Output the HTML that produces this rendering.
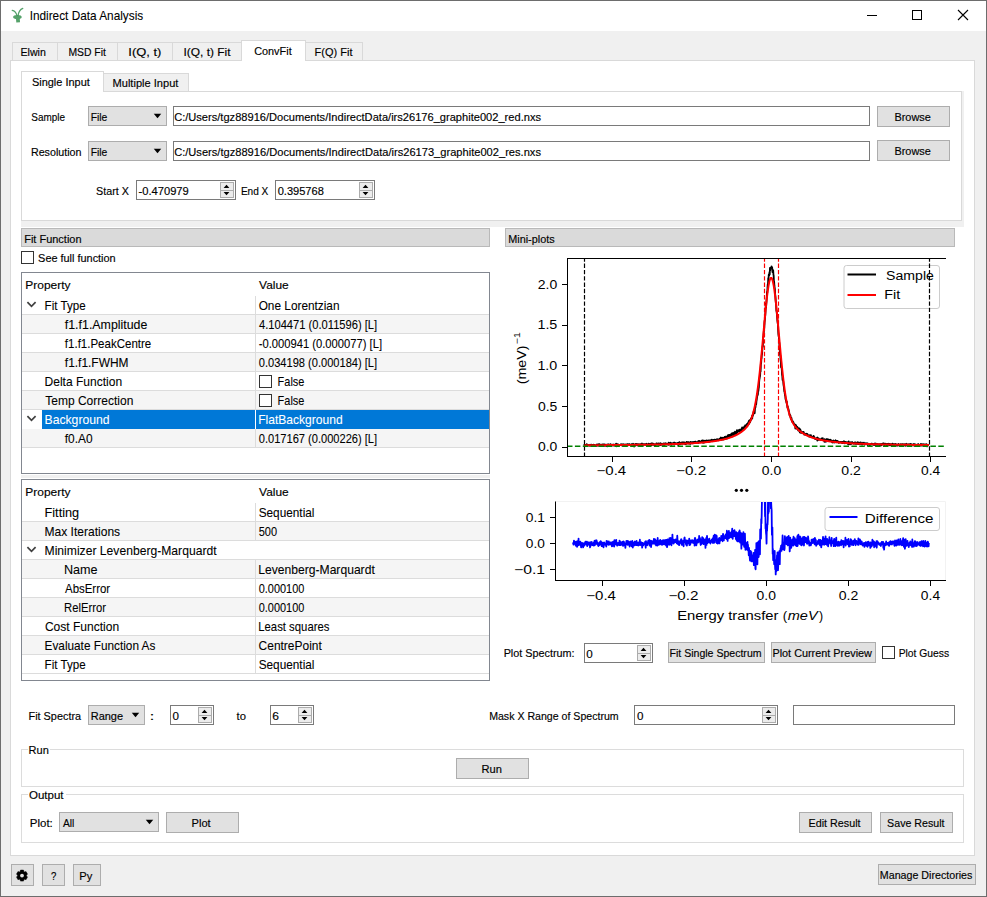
<!DOCTYPE html><html><head><meta charset="utf-8"><style>
html,body{margin:0;padding:0;}body{width:987px;height:897px;position:relative;overflow:hidden;background:#f0f0f0;font-family:"Liberation Sans",sans-serif;}
div{position:absolute;box-sizing:border-box;}svg{position:absolute;left:0;top:0;}
text{font-family:"Liberation Sans",sans-serif;white-space:pre;}
</style></head><body>
<div style="left:0px;top:0px;width:987px;height:897px;background:#f0f0f0;border:1px solid #6d6d6d;"></div>
<div style="left:1px;top:1px;width:985px;height:30px;background:#ffffff;"></div>
<div style="left:10px;top:60px;width:965px;height:796px;background:#ffffff;border:1px solid #d9d9d9;"></div>
<div style="left:12px;top:42px;width:46px;height:19px;background:#f0f0f0;border:1px solid #d9d9d9;"></div>
<div style="left:57px;top:42px;width:61px;height:19px;background:#f0f0f0;border:1px solid #d9d9d9;"></div>
<div style="left:117px;top:42px;width:56px;height:19px;background:#f0f0f0;border:1px solid #d9d9d9;"></div>
<div style="left:172px;top:42px;width:70px;height:19px;background:#f0f0f0;border:1px solid #d9d9d9;"></div>
<div style="left:305px;top:42px;width:58px;height:19px;background:#f0f0f0;border:1px solid #d9d9d9;"></div>
<div style="left:241px;top:40px;width:65px;height:21px;background:#ffffff;border:1px solid #d9d9d9;border-bottom:none;"></div>
<div style="left:21px;top:221px;width:943px;height:6px;background:#f0f0f0;"></div>
<div style="left:962px;top:91px;width:2px;height:136px;background:#f0f0f0;"></div>
<div style="left:21px;top:91px;width:941px;height:130px;background:#ffffff;border:1px solid #d9d9d9;"></div>
<div style="left:103px;top:73px;width:86px;height:19px;background:#f0f0f0;border:1px solid #d9d9d9;"></div>
<div style="left:21px;top:71px;width:83px;height:21px;background:#ffffff;border:1px solid #d9d9d9;border-bottom:none;"></div>
<div style="left:88px;top:106px;width:79px;height:20px;background:#e1e1e1;border:1px solid #adadad;"></div>
<div style="left:173px;top:106px;width:697px;height:20px;background:#ffffff;border:1px solid #7a7a7a;"></div>
<div style="left:877px;top:106px;width:73px;height:21px;background:#e1e1e1;border:1px solid #adadad;"></div>
<div style="left:88px;top:141px;width:79px;height:20px;background:#e1e1e1;border:1px solid #adadad;"></div>
<div style="left:173px;top:141px;width:697px;height:20px;background:#ffffff;border:1px solid #7a7a7a;"></div>
<div style="left:877px;top:140px;width:73px;height:21px;background:#e1e1e1;border:1px solid #adadad;"></div>
<div style="left:136px;top:180px;width:100px;height:20px;background:#ffffff;border:1px solid #7a7a7a;"></div>
<div style="left:220px;top:182px;width:14px;height:9px;background:#ececec;border:1px solid #acacac;"></div>
<div style="left:220px;top:190px;width:14px;height:8px;background:#ececec;border:1px solid #acacac;"></div>
<div style="left:275px;top:180px;width:100px;height:20px;background:#ffffff;border:1px solid #7a7a7a;"></div>
<div style="left:359px;top:182px;width:14px;height:9px;background:#ececec;border:1px solid #acacac;"></div>
<div style="left:359px;top:190px;width:14px;height:8px;background:#ececec;border:1px solid #acacac;"></div>
<div style="left:21px;top:228px;width:469px;height:19px;background:#dadada;border:1px solid #b9b9b9;"></div>
<div style="left:21px;top:251px;width:13px;height:13px;background:#ffffff;border:1px solid #333333;"></div>
<div style="left:21px;top:272px;width:469px;height:202px;background:#ffffff;border:1px solid #828790;"></div>
<div style="left:22px;top:314px;width:467px;height:1px;background:#dcdcdc;"></div>
<div style="left:255px;top:296px;width:1px;height:19px;background:#dcdcdc;"></div>
<div style="left:22px;top:315px;width:467px;height:18px;background:#f5f5f5;"></div>
<div style="left:22px;top:333px;width:467px;height:1px;background:#dcdcdc;"></div>
<div style="left:255px;top:315px;width:1px;height:19px;background:#dcdcdc;"></div>
<div style="left:22px;top:352px;width:467px;height:1px;background:#dcdcdc;"></div>
<div style="left:255px;top:334px;width:1px;height:19px;background:#dcdcdc;"></div>
<div style="left:22px;top:353px;width:467px;height:18px;background:#f5f5f5;"></div>
<div style="left:22px;top:371px;width:467px;height:1px;background:#dcdcdc;"></div>
<div style="left:255px;top:353px;width:1px;height:19px;background:#dcdcdc;"></div>
<div style="left:22px;top:390px;width:467px;height:1px;background:#dcdcdc;"></div>
<div style="left:255px;top:372px;width:1px;height:19px;background:#dcdcdc;"></div>
<div style="left:259px;top:375px;width:13px;height:13px;background:#ffffff;border:1px solid #333333;"></div>
<div style="left:22px;top:391px;width:467px;height:18px;background:#f5f5f5;"></div>
<div style="left:22px;top:409px;width:467px;height:1px;background:#dcdcdc;"></div>
<div style="left:255px;top:391px;width:1px;height:19px;background:#dcdcdc;"></div>
<div style="left:259px;top:394px;width:13px;height:13px;background:#ffffff;border:1px solid #333333;"></div>
<div style="left:42px;top:410px;width:447px;height:19px;background:#0078d7;"></div>
<div style="left:255px;top:410px;width:1px;height:19px;background:#ffffff;"></div>
<div style="left:22px;top:429px;width:467px;height:18px;background:#f5f5f5;"></div>
<div style="left:22px;top:447px;width:467px;height:1px;background:#dcdcdc;"></div>
<div style="left:255px;top:429px;width:1px;height:19px;background:#dcdcdc;"></div>
<div style="left:21px;top:475px;width:469px;height:3px;background:#f0f0f0;"></div>
<div style="left:21px;top:479px;width:469px;height:202px;background:#ffffff;border:1px solid #828790;"></div>
<div style="left:22px;top:521px;width:467px;height:1px;background:#dcdcdc;"></div>
<div style="left:255px;top:503px;width:1px;height:19px;background:#dcdcdc;"></div>
<div style="left:22px;top:522px;width:467px;height:18px;background:#f5f5f5;"></div>
<div style="left:22px;top:540px;width:467px;height:1px;background:#dcdcdc;"></div>
<div style="left:255px;top:522px;width:1px;height:19px;background:#dcdcdc;"></div>
<div style="left:22px;top:559px;width:467px;height:1px;background:#dcdcdc;"></div>
<div style="left:22px;top:560px;width:467px;height:18px;background:#f5f5f5;"></div>
<div style="left:22px;top:578px;width:467px;height:1px;background:#dcdcdc;"></div>
<div style="left:255px;top:560px;width:1px;height:19px;background:#dcdcdc;"></div>
<div style="left:22px;top:597px;width:467px;height:1px;background:#dcdcdc;"></div>
<div style="left:255px;top:579px;width:1px;height:19px;background:#dcdcdc;"></div>
<div style="left:22px;top:598px;width:467px;height:18px;background:#f5f5f5;"></div>
<div style="left:22px;top:616px;width:467px;height:1px;background:#dcdcdc;"></div>
<div style="left:255px;top:598px;width:1px;height:19px;background:#dcdcdc;"></div>
<div style="left:22px;top:635px;width:467px;height:1px;background:#dcdcdc;"></div>
<div style="left:255px;top:617px;width:1px;height:19px;background:#dcdcdc;"></div>
<div style="left:22px;top:636px;width:467px;height:18px;background:#f5f5f5;"></div>
<div style="left:22px;top:654px;width:467px;height:1px;background:#dcdcdc;"></div>
<div style="left:255px;top:636px;width:1px;height:19px;background:#dcdcdc;"></div>
<div style="left:22px;top:673px;width:467px;height:1px;background:#dcdcdc;"></div>
<div style="left:255px;top:655px;width:1px;height:19px;background:#dcdcdc;"></div>
<div style="left:505px;top:228px;width:450px;height:19px;background:#dadada;border:1px solid #b9b9b9;"></div>
<div style="left:584px;top:643px;width:69px;height:20px;background:#ffffff;border:1px solid #7a7a7a;"></div>
<div style="left:637px;top:645px;width:14px;height:9px;background:#ececec;border:1px solid #acacac;"></div>
<div style="left:637px;top:653px;width:14px;height:8px;background:#ececec;border:1px solid #acacac;"></div>
<div style="left:668px;top:642px;width:97px;height:21px;background:#e1e1e1;border:1px solid #adadad;"></div>
<div style="left:771px;top:642px;width:105px;height:21px;background:#e1e1e1;border:1px solid #adadad;"></div>
<div style="left:882px;top:646px;width:13px;height:13px;background:#ffffff;border:1px solid #333333;"></div>
<div style="left:88px;top:705px;width:57px;height:20px;background:#e1e1e1;border:1px solid #adadad;"></div>
<div style="left:170px;top:705px;width:44px;height:20px;background:#ffffff;border:1px solid #7a7a7a;"></div>
<div style="left:198px;top:707px;width:14px;height:9px;background:#ececec;border:1px solid #acacac;"></div>
<div style="left:198px;top:715px;width:14px;height:8px;background:#ececec;border:1px solid #acacac;"></div>
<div style="left:270px;top:705px;width:44px;height:20px;background:#ffffff;border:1px solid #7a7a7a;"></div>
<div style="left:298px;top:707px;width:14px;height:9px;background:#ececec;border:1px solid #acacac;"></div>
<div style="left:298px;top:715px;width:14px;height:8px;background:#ececec;border:1px solid #acacac;"></div>
<div style="left:634px;top:705px;width:144px;height:20px;background:#ffffff;border:1px solid #7a7a7a;"></div>
<div style="left:762px;top:707px;width:14px;height:9px;background:#ececec;border:1px solid #acacac;"></div>
<div style="left:762px;top:715px;width:14px;height:8px;background:#ececec;border:1px solid #acacac;"></div>
<div style="left:793px;top:705px;width:162px;height:20px;background:#ffffff;border:1px solid #7a7a7a;"></div>
<div style="left:21px;top:749px;width:943px;height:38px;background:#ffffff;border:1px solid #dcdcdc;"></div>
<div style="left:27.5px;top:748px;width:22.7px;height:3px;background:#ffffff;"></div>
<div style="left:456px;top:758px;width:73px;height:21px;background:#e1e1e1;border:1px solid #adadad;"></div>
<div style="left:21px;top:794px;width:943px;height:49px;background:#ffffff;border:1px solid #dcdcdc;"></div>
<div style="left:27.5px;top:793px;width:38px;height:3px;background:#ffffff;"></div>
<div style="left:59px;top:812px;width:100px;height:20px;background:#e1e1e1;border:1px solid #adadad;"></div>
<div style="left:166px;top:812px;width:73px;height:21px;background:#e1e1e1;border:1px solid #adadad;"></div>
<div style="left:799px;top:812px;width:73px;height:21px;background:#e1e1e1;border:1px solid #adadad;"></div>
<div style="left:880px;top:812px;width:73px;height:21px;background:#e1e1e1;border:1px solid #adadad;"></div>
<div style="left:11px;top:864px;width:23px;height:22px;background:#e1e1e1;border:1px solid #adadad;"></div>
<div style="left:42px;top:864px;width:23px;height:22px;background:#e1e1e1;border:1px solid #adadad;"></div>
<div style="left:73px;top:864px;width:28px;height:22px;background:#e1e1e1;border:1px solid #adadad;"></div>
<div style="left:878px;top:864px;width:98px;height:21px;background:#e1e1e1;border:1px solid #adadad;"></div>
<div style="left:505px;top:250px;width:441px;height:234px;background:#ffffff;"></div>
<div style="left:505px;top:484px;width:441px;height:150px;background:#ffffff;"></div>
<svg width="987" height="897" viewBox="0 0 987 897">
<g fill="none" stroke="#43985a" stroke-linecap="round" opacity="0.9">
<path d="M12.2 10.4 C14.6 10.8 16.2 12.6 17.0 15.6" stroke-width="1.2"/>
<path d="M22.8 8.4 C20.2 9.4 18.6 11.8 18.1 15.6" stroke-width="1.2"/>
</g>
<g fill="#43985a" opacity="0.9">
<ellipse cx="17.4" cy="16.9" rx="4.3" ry="2.0"/>
<path d="M15.9 17.5 L19.7 17.5 L20 22.2 L16.3 22.5 Z"/>
</g>
<rect x="867" y="15" width="10" height="1" fill="#000"/>
<rect x="912.5" y="10.5" width="9" height="9" fill="none" stroke="#000" stroke-width="1"/>
<path d="M958 10 L968 20 M968 10 L958 20" stroke="#000" stroke-width="1.1" fill="none"/>
<path d="M153.75 113.75 L161.25 113.75 L157.50 118.25 Z" fill="#000"/>
<path d="M153.75 148.75 L161.25 148.75 L157.50 153.25 Z" fill="#000"/>
<path d="M223.60 188.05 L229.40 188.05 L226.50 184.75 Z" fill="#000"/>
<path d="M223.60 191.95 L229.40 191.95 L226.50 195.25 Z" fill="#000"/>
<path d="M362.60 188.05 L368.40 188.05 L365.50 184.75 Z" fill="#000"/>
<path d="M362.60 191.95 L368.40 191.95 L365.50 195.25 Z" fill="#000"/>
<path d="M27.40 302.20 L31.50 306.40 L35.60 302.20" fill="none" stroke="#404040" stroke-width="1.7"/>
<path d="M27.40 416.20 L31.50 420.40 L35.60 416.20" fill="none" stroke="#404040" stroke-width="1.7"/>
<path d="M27.40 547.20 L31.50 551.40 L35.60 547.20" fill="none" stroke="#404040" stroke-width="1.7"/>
<path d="M640.60 651.05 L646.40 651.05 L643.50 647.75 Z" fill="#000"/>
<path d="M640.60 654.95 L646.40 654.95 L643.50 658.25 Z" fill="#000"/>
<path d="M131.75 712.75 L139.25 712.75 L135.50 717.25 Z" fill="#000"/>
<path d="M201.60 713.05 L207.40 713.05 L204.50 709.75 Z" fill="#000"/>
<path d="M201.60 716.95 L207.40 716.95 L204.50 720.25 Z" fill="#000"/>
<path d="M301.60 713.05 L307.40 713.05 L304.50 709.75 Z" fill="#000"/>
<path d="M301.60 716.95 L307.40 716.95 L304.50 720.25 Z" fill="#000"/>
<path d="M765.60 713.05 L771.40 713.05 L768.50 709.75 Z" fill="#000"/>
<path d="M765.60 716.95 L771.40 716.95 L768.50 720.25 Z" fill="#000"/>
<path d="M145.75 819.75 L153.25 819.75 L149.50 824.25 Z" fill="#000"/>
<polygon points="20.52,870.09 23.48,870.09 23.90,871.52 24.58,871.91 26.03,871.57 27.51,874.12 26.48,875.21 26.48,875.99 27.51,877.08 26.03,879.63 24.58,879.29 23.90,879.68 23.48,881.11 20.52,881.11 20.10,879.68 19.42,879.29 17.97,879.63 16.49,877.08 17.52,875.99 17.52,875.21 16.49,874.12 17.97,871.57 19.42,871.91 20.10,871.52" fill="#000" stroke="#000" stroke-width="0.5" stroke-linejoin="round"/>
<circle cx="22.0" cy="875.6" r="1.9" fill="#e1e1e1"/>
<defs><clipPath id="ctop"><rect x="567.5" y="258.5" width="378.5" height="198"/></clipPath><clipPath id="cbot"><rect x="555.5" y="501.5" width="390.5" height="79"/></clipPath></defs>
<g clip-path="url(#ctop)">
<polyline points="584.05,444.32 584.30,445.05 584.54,445.35 584.79,445.20 585.04,444.92 585.28,444.94 585.53,445.27 585.78,444.86 586.02,445.29 586.27,445.47 586.52,445.29 586.76,444.15 587.01,445.65 587.26,445.34 587.50,445.75 587.75,445.03 588.00,445.60 588.24,445.46 588.49,445.07 588.74,445.13 588.98,445.16 589.23,445.07 589.48,445.19 589.72,445.16 589.97,445.81 590.21,444.76 590.46,444.82 590.71,445.66 590.95,445.14 591.20,444.63 591.45,445.30 591.69,445.18 591.94,444.91 592.19,444.93 592.43,445.57 592.68,444.99 592.93,444.96 593.17,445.45 593.42,445.53 593.67,444.60 593.91,445.18 594.16,445.03 594.41,445.61 594.65,445.05 594.90,445.70 595.15,445.34 595.39,445.42 595.64,445.44 595.89,445.54 596.13,446.00 596.38,445.26 596.63,444.87 596.87,444.44 597.12,445.08 597.37,445.55 597.61,445.31 597.86,444.41 598.11,445.62 598.35,444.47 598.60,445.05 598.85,444.97 599.09,445.46 599.34,444.20 599.58,445.19 599.83,445.23 600.08,444.86 600.32,445.88 600.57,445.85 600.82,444.64 601.06,444.57 601.31,445.16 601.56,446.09 601.80,445.27 602.05,445.92 602.30,444.48 602.54,445.32 602.79,444.79 603.04,445.73 603.28,444.73 603.53,444.86 603.78,444.99 604.02,444.29 604.27,444.37 604.52,445.88 604.76,445.31 605.01,445.24 605.26,445.53 605.50,444.67 605.75,445.88 606.00,445.23 606.24,445.56 606.49,445.80 606.74,444.57 606.98,444.65 607.23,446.28 607.48,444.93 607.72,445.65 607.97,444.34 608.22,444.98 608.46,444.34 608.71,445.20 608.95,445.01 609.20,445.36 609.45,444.89 609.69,444.88 609.94,444.53 610.19,445.24 610.43,444.40 610.68,444.12 610.93,445.88 611.17,445.25 611.42,445.16 611.67,445.63 611.91,445.09 612.16,444.95 612.41,445.33 612.65,444.67 612.90,445.41 613.15,445.67 613.39,445.19 613.64,445.03 613.89,444.52 614.13,445.22 614.38,445.04 614.63,444.91 614.87,445.32 615.12,444.76 615.37,445.12 615.61,444.93 615.86,445.26 616.11,443.64 616.35,446.25 616.60,445.18 616.85,445.24 617.09,444.94 617.34,444.22 617.59,444.62 617.83,445.32 618.08,444.78 618.32,444.55 618.57,444.75 618.82,445.05 619.06,444.98 619.31,445.10 619.56,444.94 619.80,444.84 620.05,445.07 620.30,444.62 620.54,445.19 620.79,444.48 621.04,444.23 621.28,444.36 621.53,444.83 621.78,445.38 622.02,444.71 622.27,444.96 622.52,445.73 622.76,444.29 623.01,444.12 623.26,444.65 623.50,445.14 623.75,444.57 624.00,444.49 624.24,446.00 624.49,445.77 624.74,445.35 624.98,444.60 625.23,444.90 625.48,444.88 625.72,444.94 625.97,444.47 626.22,444.68 626.46,445.32 626.71,444.67 626.96,444.97 627.20,444.23 627.45,444.17 627.70,445.45 627.94,444.67 628.19,444.22 628.43,445.13 628.68,444.50 628.93,444.75 629.17,444.51 629.42,444.26 629.67,444.24 629.91,444.99 630.16,444.88 630.41,445.08 630.65,445.35 630.90,444.64 631.15,444.69 631.39,445.37 631.64,444.24 631.89,445.74 632.13,445.62 632.38,444.83 632.63,444.29 632.87,444.33 633.12,443.72 633.37,444.74 633.61,444.56 633.86,444.90 634.11,446.60 634.35,445.53 634.60,444.96 634.85,445.12 635.09,444.15 635.34,445.11 635.59,444.24 635.83,444.95 636.08,444.19 636.33,443.89 636.57,444.13 636.82,444.36 637.07,444.91 637.31,445.50 637.56,444.05 637.80,444.33 638.05,445.45 638.30,444.32 638.54,444.89 638.79,444.28 639.04,444.57 639.28,445.41 639.53,444.47 639.78,444.43 640.02,444.38 640.27,445.54 640.52,444.28 640.76,444.93 641.01,444.76 641.26,444.10 641.50,445.00 641.75,443.95 642.00,443.50 642.24,445.12 642.49,444.78 642.74,444.94 642.98,444.77 643.23,444.54 643.48,444.21 643.72,444.75 643.97,444.06 644.22,444.66 644.46,444.65 644.71,444.54 644.96,444.07 645.20,444.38 645.45,444.56 645.70,444.77 645.94,444.55 646.19,444.40 646.44,443.79 646.68,444.58 646.93,444.96 647.17,444.64 647.42,444.63 647.67,444.37 647.91,444.80 648.16,444.85 648.41,445.67 648.65,443.72 648.90,444.91 649.15,444.23 649.39,444.21 649.64,445.09 649.89,444.47 650.13,444.23 650.38,443.71 650.63,444.03 650.87,445.48 651.12,444.86 651.37,444.67 651.61,443.35 651.86,444.98 652.11,443.33 652.35,444.20 652.60,444.47 652.85,444.70 653.09,443.54 653.34,444.57 653.59,444.09 653.83,444.48 654.08,444.87 654.33,445.24 654.57,444.27 654.82,444.55 655.07,444.96 655.31,445.31 655.56,444.33 655.81,445.01 656.05,444.12 656.30,443.52 656.54,443.35 656.79,443.42 657.04,444.43 657.28,443.64 657.53,444.40 657.78,444.06 658.02,444.63 658.27,444.06 658.52,443.41 658.76,443.80 659.01,444.84 659.26,444.34 659.50,444.50 659.75,444.85 660.00,444.85 660.24,443.24 660.49,443.63 660.74,445.07 660.98,444.67 661.23,443.70 661.48,444.42 661.72,444.67 661.97,444.35 662.22,444.68 662.46,444.43 662.71,444.00 662.96,443.62 663.20,443.74 663.45,444.79 663.70,443.49 663.94,444.16 664.19,444.39 664.44,443.74 664.68,444.79 664.93,443.52 665.18,444.34 665.42,443.58 665.67,443.16 665.91,444.44 666.16,443.89 666.41,444.05 666.65,443.83 666.90,443.60 667.15,444.23 667.39,444.40 667.64,444.13 667.89,444.53 668.13,443.99 668.38,444.64 668.63,442.64 668.87,444.91 669.12,444.35 669.37,443.36 669.61,443.29 669.86,443.61 670.11,444.37 670.35,442.66 670.60,443.61 670.85,443.13 671.09,443.55 671.34,444.94 671.59,444.42 671.83,443.26 672.08,443.70 672.33,444.41 672.57,444.02 672.82,443.22 673.07,444.14 673.31,443.71 673.56,443.60 673.81,442.71 674.05,444.63 674.30,443.86 674.55,442.71 674.79,443.75 675.04,443.79 675.28,443.42 675.53,443.18 675.78,443.75 676.02,443.85 676.27,443.44 676.52,443.45 676.76,444.14 677.01,443.33 677.26,443.40 677.50,444.23 677.75,442.91 678.00,444.15 678.24,445.04 678.49,443.11 678.74,442.79 678.98,443.22 679.23,443.64 679.48,442.25 679.72,444.45 679.97,443.69 680.22,443.74 680.46,443.47 680.71,443.70 680.96,443.28 681.20,443.78 681.45,442.69 681.70,442.52 681.94,443.32 682.19,442.93 682.44,443.56 682.68,442.34 682.93,442.23 683.18,443.62 683.42,443.50 683.67,442.96 683.92,442.58 684.16,442.63 684.41,443.43 684.65,442.39 684.90,443.02 685.15,444.23 685.39,442.97 685.64,442.99 685.89,442.63 686.13,442.76 686.38,443.92 686.63,441.82 686.87,443.38 687.12,442.38 687.37,442.27 687.61,442.83 687.86,443.22 688.11,442.22 688.35,443.01 688.60,442.24 688.85,442.98 689.09,443.62 689.34,442.82 689.59,443.11 689.83,443.04 690.08,443.85 690.33,441.81 690.57,443.81 690.82,442.64 691.07,443.16 691.31,442.22 691.56,442.45 691.81,442.55 692.05,442.75 692.30,443.37 692.55,442.23 692.79,442.69 693.04,441.98 693.29,442.41 693.53,442.73 693.78,442.02 694.03,442.66 694.27,442.54 694.52,442.03 694.76,442.13 695.01,441.78 695.26,442.47 695.50,441.59 695.75,442.57 696.00,442.40 696.24,442.57 696.49,442.74 696.74,442.25 696.98,442.34 697.23,442.47 697.48,442.99 697.72,442.34 697.97,442.01 698.22,441.20 698.46,442.27 698.71,442.86 698.96,441.87 699.20,440.82 699.45,441.96 699.70,442.15 699.94,441.52 700.19,441.71 700.44,442.00 700.68,441.74 700.93,441.94 701.18,442.12 701.42,441.60 701.67,440.64 701.92,442.22 702.16,442.61 702.41,441.46 702.66,440.48 702.90,441.07 703.15,440.83 703.40,442.39 703.64,440.71 703.89,442.82 704.13,441.34 704.38,442.27 704.63,441.64 704.87,440.74 705.12,440.62 705.37,441.63 705.61,441.13 705.86,441.20 706.11,441.43 706.35,441.74 706.60,440.36 706.85,441.40 707.09,440.66 707.34,441.80 707.59,441.26 707.83,440.59 708.08,441.83 708.33,440.40 708.57,440.64 708.82,441.47 709.07,440.72 709.31,441.74 709.56,440.53 709.81,441.04 710.05,440.66 710.30,440.19 710.55,440.53 710.79,441.23 711.04,441.19 711.29,440.71 711.53,440.55 711.78,439.68 712.03,440.42 712.27,440.63 712.52,440.72 712.77,440.06 713.01,440.63 713.26,440.07 713.50,440.94 713.75,440.21 714.00,440.94 714.24,439.99 714.49,439.69 714.74,439.75 714.98,439.75 715.23,439.84 715.48,440.10 715.72,440.93 715.97,439.71 716.22,439.78 716.46,439.96 716.71,439.58 716.96,439.07 717.20,440.07 717.45,439.98 717.70,439.33 717.94,439.78 718.19,439.77 718.44,440.26 718.68,439.93 718.93,439.87 719.18,439.36 719.42,438.76 719.67,438.78 719.92,438.93 720.16,438.71 720.41,439.83 720.66,438.00 720.90,437.47 721.15,439.61 721.40,438.38 721.64,439.75 721.89,438.05 722.14,438.44 722.38,437.82 722.63,438.53 722.87,437.74 723.12,439.50 723.37,438.01 723.61,438.53 723.86,439.42 724.11,437.63 724.35,438.08 724.60,436.87 724.85,437.21 725.09,438.19 725.34,437.33 725.59,438.97 725.83,437.54 726.08,436.54 726.33,437.33 726.57,437.43 726.82,438.53 727.07,438.31 727.31,436.50 727.56,437.87 727.81,435.43 728.05,436.42 728.30,435.02 728.55,437.00 728.79,435.62 729.04,436.93 729.29,434.96 729.53,437.28 729.78,435.96 730.03,435.79 730.27,435.11 730.52,434.53 730.77,436.31 731.01,435.42 731.26,435.25 731.51,437.19 731.75,433.39 732.00,435.10 732.24,433.16 732.49,434.06 732.74,434.48 732.98,433.06 733.23,433.06 733.48,435.05 733.72,434.12 733.97,433.22 734.22,432.45 734.46,434.07 734.71,432.90 734.96,431.68 735.20,433.34 735.45,432.78 735.70,434.02 735.94,432.85 736.19,432.39 736.44,433.71 736.68,431.61 736.93,430.22 737.18,430.56 737.42,432.38 737.67,430.82 737.92,430.76 738.16,431.71 738.41,430.11 738.66,430.48 738.90,430.90 739.15,430.10 739.40,431.03 739.64,429.65 739.89,431.63 740.14,429.99 740.38,430.31 740.63,430.62 740.88,429.56 741.12,429.10 741.37,430.75 741.61,430.09 741.86,428.50 742.11,427.45 742.35,429.00 742.60,428.60 742.85,428.12 743.09,427.88 743.34,428.20 743.59,427.78 743.83,427.12 744.08,429.22 744.33,427.60 744.57,426.21 744.82,427.94 745.07,426.19 745.31,425.25 745.56,425.47 745.81,425.97 746.05,425.50 746.30,426.20 746.55,425.72 746.79,424.69 747.04,423.80 747.29,426.37 747.53,424.44 747.78,424.16 748.03,423.21 748.27,422.28 748.52,421.85 748.77,424.11 749.01,420.73 749.26,421.48 749.51,421.16 749.75,421.74 750.00,422.41 750.25,419.59 750.49,420.60 750.74,420.53 750.98,418.39 751.23,419.17 751.48,418.23 751.72,417.99 751.97,415.84 752.22,418.63 752.46,415.77 752.71,415.08 752.96,415.62 753.20,414.03 753.45,412.83 753.70,411.47 753.94,411.06 754.19,410.65 754.44,409.70 754.68,413.25 754.93,408.71 755.18,407.90 755.42,407.38 755.67,405.38 755.92,402.88 756.16,404.46 756.41,401.43 756.66,400.13 756.90,398.04 757.15,396.72 757.40,394.86 757.64,395.31 757.89,394.32 758.14,388.68 758.38,391.08 758.63,388.72 758.88,387.01 759.12,382.05 759.37,379.67 759.62,378.34 759.86,376.23 760.11,376.25 760.35,370.83 760.60,371.40 760.85,364.18 761.09,364.07 761.34,359.55 761.59,357.89 761.83,354.44 762.08,354.31 762.33,349.43 762.57,346.10 762.82,346.62 763.07,338.28 763.31,337.62 763.56,335.15 763.81,331.47 764.05,328.86 764.30,328.08 764.55,322.16 764.79,320.30 765.04,317.52 765.29,315.09 765.53,310.45 765.78,303.77 766.03,307.84 766.27,304.02 766.52,300.58 766.77,296.59 767.01,291.82 767.26,293.08 767.51,287.61 767.75,284.43 768.00,284.60 768.25,278.04 768.49,280.01 768.74,275.06 768.99,274.26 769.23,275.34 769.48,272.25 769.73,274.42 769.97,267.83 770.22,270.33 770.46,267.95 770.71,268.01 770.96,268.33 771.20,268.22 771.45,266.51 771.70,266.63 771.94,267.83 772.19,267.55 772.44,272.01 772.68,269.63 772.93,271.98 773.18,270.42 773.42,274.56 773.67,275.64 773.92,281.73 774.16,281.74 774.41,285.97 774.66,287.55 774.90,289.40 775.15,293.98 775.40,296.29 775.64,299.93 775.89,302.89 776.14,305.41 776.38,310.87 776.63,310.62 776.88,314.79 777.12,317.36 777.37,320.54 777.62,322.50 777.86,323.75 778.11,329.17 778.36,333.86 778.60,335.89 778.85,336.80 779.10,342.68 779.34,342.85 779.59,350.01 779.83,349.02 780.08,354.77 780.33,355.66 780.57,359.80 780.82,361.26 781.07,367.17 781.31,366.98 781.56,367.61 781.81,369.72 782.05,374.67 782.30,376.01 782.55,379.95 782.79,379.02 783.04,379.96 783.29,382.14 783.53,385.17 783.78,386.28 784.03,388.37 784.27,391.25 784.52,391.68 784.77,393.76 785.01,395.49 785.26,395.93 785.51,399.05 785.75,399.70 786.00,401.09 786.25,401.08 786.49,402.85 786.74,401.28 786.99,404.58 787.23,405.45 787.48,407.88 787.73,406.29 787.97,408.57 788.22,408.21 788.47,409.68 788.71,410.23 788.96,412.06 789.20,412.38 789.45,414.33 789.70,415.56 789.94,414.52 790.19,415.06 790.44,415.70 790.68,417.91 790.93,418.94 791.18,418.79 791.42,417.78 791.67,419.33 791.92,421.39 792.16,421.02 792.41,422.02 792.66,421.90 792.90,421.32 793.15,422.60 793.40,422.23 793.64,423.21 793.89,424.23 794.14,423.93 794.38,424.63 794.63,424.81 794.88,425.86 795.12,426.03 795.37,428.55 795.62,424.73 795.86,426.56 796.11,425.56 796.36,428.47 796.60,426.49 796.85,428.75 797.10,426.92 797.34,426.94 797.59,428.94 797.84,429.57 798.08,429.30 798.33,430.62 798.57,429.58 798.82,428.23 799.07,430.13 799.31,429.86 799.56,428.75 799.81,432.34 800.05,429.47 800.30,429.34 800.55,431.86 800.79,432.79 801.04,431.20 801.29,431.76 801.53,432.49 801.78,431.91 802.03,432.74 802.27,432.58 802.52,432.15 802.77,432.28 803.01,432.66 803.26,432.01 803.51,433.40 803.75,432.15 804.00,434.14 804.25,434.62 804.49,433.69 804.74,433.84 804.99,434.62 805.23,434.19 805.48,434.74 805.73,434.43 805.97,433.70 806.22,433.59 806.47,434.20 806.71,434.12 806.96,435.16 807.21,433.95 807.45,434.44 807.70,434.38 807.94,435.19 808.19,435.63 808.44,436.23 808.68,435.71 808.93,436.22 809.18,436.48 809.42,435.67 809.67,435.19 809.92,435.78 810.16,435.40 810.41,436.71 810.66,436.58 810.90,435.17 811.15,437.05 811.40,436.76 811.64,436.75 811.89,437.05 812.14,436.69 812.38,437.44 812.63,437.35 812.88,437.00 813.12,437.07 813.37,437.35 813.62,435.82 813.86,438.14 814.11,436.94 814.36,437.02 814.60,438.50 814.85,438.26 815.10,438.53 815.34,438.77 815.59,439.13 815.84,438.85 816.08,439.00 816.33,438.82 816.58,438.32 816.82,438.14 817.07,437.58 817.31,440.66 817.56,437.58 817.81,439.33 818.05,438.71 818.30,439.92 818.55,438.92 818.79,438.44 819.04,439.79 819.29,439.17 819.53,439.42 819.78,439.37 820.03,439.52 820.27,439.44 820.52,439.85 820.77,439.07 821.01,439.93 821.26,439.55 821.51,438.49 821.75,439.40 822.00,439.76 822.25,438.36 822.49,439.16 822.74,438.09 822.99,439.79 823.23,439.61 823.48,439.89 823.73,439.49 823.97,440.72 824.22,439.79 824.47,441.77 824.71,439.04 824.96,439.93 825.21,440.75 825.45,439.62 825.70,441.24 825.95,441.73 826.19,441.00 826.44,440.32 826.68,441.11 826.93,438.83 827.18,440.67 827.42,440.13 827.67,440.29 827.92,440.73 828.16,439.68 828.41,439.39 828.66,440.55 828.90,440.36 829.15,439.82 829.40,440.92 829.64,440.92 829.89,441.29 830.14,439.58 830.38,440.47 830.63,440.56 830.88,440.10 831.12,440.74 831.37,440.43 831.62,441.47 831.86,440.81 832.11,442.24 832.36,441.26 832.60,442.47 832.85,441.05 833.10,440.91 833.34,440.53 833.59,442.25 833.84,441.54 834.08,441.86 834.33,441.20 834.58,441.61 834.82,442.47 835.07,441.31 835.32,440.89 835.56,440.23 835.81,440.94 836.06,440.98 836.30,441.21 836.55,441.92 836.79,440.85 837.04,442.42 837.29,441.17 837.53,441.90 837.78,441.04 838.03,441.78 838.27,442.09 838.52,442.25 838.77,442.94 839.01,442.16 839.26,442.13 839.51,441.96 839.75,442.51 840.00,442.60 840.25,441.85 840.49,442.50 840.74,441.96 840.99,441.85 841.23,441.95 841.48,441.99 841.73,442.09 841.97,443.06 842.22,442.11 842.47,442.75 842.71,441.94 842.96,443.12 843.21,442.62 843.45,441.95 843.70,442.57 843.95,441.22 844.19,442.23 844.44,442.12 844.69,443.35 844.93,443.06 845.18,441.80 845.43,442.22 845.67,443.09 845.92,442.84 846.16,442.17 846.41,443.21 846.66,442.60 846.90,442.80 847.15,442.29 847.40,442.75 847.64,443.16 847.89,442.89 848.14,444.42 848.38,442.30 848.63,441.42 848.88,443.04 849.12,444.30 849.37,442.64 849.62,443.12 849.86,443.75 850.11,442.42 850.36,443.56 850.60,442.38 850.85,444.26 851.10,443.98 851.34,443.26 851.59,443.49 851.84,442.24 852.08,442.40 852.33,442.17 852.58,442.73 852.82,442.62 853.07,442.83 853.32,443.08 853.56,443.56 853.81,443.00 854.06,443.40 854.30,443.69 854.55,443.59 854.80,442.46 855.04,442.76 855.29,443.82 855.53,442.31 855.78,443.46 856.03,443.81 856.27,443.89 856.52,442.98 856.77,443.82 857.01,443.17 857.26,443.30 857.51,442.28 857.75,443.27 858.00,444.06 858.25,442.42 858.49,442.99 858.74,444.00 858.99,444.01 859.23,443.86 859.48,443.93 859.73,442.62 859.97,443.96 860.22,442.96 860.47,443.91 860.71,442.51 860.96,443.98 861.21,444.16 861.45,443.67 861.70,444.41 861.95,443.92 862.19,444.51 862.44,442.78 862.69,443.61 862.93,443.66 863.18,443.99 863.43,443.49 863.67,444.17 863.92,442.73 864.17,444.15 864.41,444.28 864.66,444.54 864.90,443.43 865.15,443.99 865.40,443.61 865.64,444.13 865.89,443.18 866.14,444.25 866.38,443.81 866.63,443.97 866.88,443.36 867.12,443.91 867.37,443.37 867.62,444.52 867.86,444.98 868.11,443.74 868.36,444.44 868.60,443.81 868.85,444.09 869.10,444.61 869.34,444.53 869.59,444.80 869.84,445.03 870.08,443.86 870.33,443.96 870.58,444.70 870.82,444.59 871.07,444.37 871.32,443.56 871.56,443.74 871.81,443.73 872.06,443.64 872.30,444.17 872.55,444.21 872.80,443.95 873.04,444.64 873.29,444.87 873.54,444.55 873.78,444.31 874.03,443.85 874.27,443.67 874.52,444.90 874.77,443.59 875.01,445.02 875.26,443.69 875.51,444.61 875.75,443.78 876.00,444.65 876.25,443.77 876.49,444.95 876.74,444.94 876.99,444.12 877.23,444.22 877.48,444.31 877.73,443.96 877.97,444.91 878.22,444.28 878.47,444.30 878.71,444.72 878.96,444.48 879.21,444.82 879.45,444.94 879.70,444.22 879.95,444.11 880.19,444.17 880.44,445.32 880.69,445.27 880.93,444.24 881.18,444.83 881.43,445.18 881.67,444.64 881.92,443.93 882.17,443.97 882.41,444.32 882.66,443.72 882.91,444.01 883.15,443.46 883.40,444.68 883.64,443.43 883.89,443.85 884.14,443.74 884.38,444.40 884.63,445.05 884.88,444.25 885.12,443.61 885.37,444.48 885.62,444.24 885.86,443.87 886.11,444.48 886.36,445.25 886.60,444.42 886.85,445.32 887.10,443.97 887.34,444.34 887.59,444.04 887.84,444.95 888.08,444.98 888.33,444.13 888.58,443.69 888.82,443.88 889.07,444.47 889.32,444.03 889.56,443.90 889.81,445.28 890.06,444.22 890.30,445.25 890.55,444.69 890.80,444.24 891.04,444.92 891.29,444.74 891.54,444.16 891.78,445.29 892.03,445.01 892.28,444.76 892.52,443.74 892.77,444.19 893.01,445.31 893.26,444.07 893.51,444.77 893.75,444.74 894.00,444.13 894.25,445.05 894.49,444.67 894.74,445.05 894.99,444.24 895.23,443.89 895.48,444.62 895.73,444.73 895.97,444.25 896.22,444.30 896.47,445.40 896.71,444.75 896.96,444.96 897.21,445.57 897.45,444.64 897.70,445.55 897.95,444.33 898.19,444.44 898.44,443.98 898.69,444.56 898.93,444.42 899.18,445.22 899.43,444.89 899.67,444.99 899.92,444.74 900.17,444.67 900.41,445.15 900.66,444.20 900.91,444.20 901.15,444.36 901.40,444.78 901.65,445.58 901.89,445.56 902.14,444.20 902.39,444.63 902.63,444.66 902.88,444.30 903.12,444.47 903.37,444.75 903.62,444.68 903.86,444.71 904.11,444.25 904.36,444.95 904.60,444.91 904.85,444.32 905.10,445.49 905.34,444.93 905.59,444.73 905.84,445.77 906.08,445.10 906.33,443.78 906.58,444.93 906.82,444.40 907.07,444.57 907.32,444.68 907.56,444.45 907.81,444.85 908.06,444.65 908.30,444.55 908.55,444.63 908.80,444.25 909.04,444.74 909.29,444.54 909.54,444.90 909.78,444.14 910.03,444.80 910.28,445.23 910.52,444.93 910.77,443.91 911.02,445.46 911.26,445.18 911.51,444.46 911.76,445.18 912.00,445.09 912.25,445.32 912.49,445.33 912.74,444.95 912.99,444.76 913.23,444.11 913.48,444.94 913.73,444.69 913.97,444.08 914.22,445.92 914.47,445.20 914.71,445.28 914.96,444.27 915.21,444.42 915.45,445.13 915.70,444.87 915.95,444.68 916.19,445.22 916.44,445.49 916.69,445.07 916.93,444.71 917.18,445.16 917.43,445.08 917.67,444.46 917.92,444.90 918.17,444.17 918.41,444.61 918.66,444.32 918.91,444.78 919.15,445.42 919.40,445.63 919.65,445.38 919.89,444.93 920.14,445.58 920.39,444.83 920.63,444.85 920.88,443.93 921.13,445.69 921.37,445.36 921.62,445.43 921.86,444.92 922.11,445.17 922.36,444.26 922.60,445.22 922.85,445.36 923.10,444.63 923.34,444.68 923.59,445.39 923.84,444.22 924.08,444.77 924.33,444.70 924.58,445.55 924.82,445.07 925.07,445.41 925.32,444.41 925.56,445.42 925.81,445.08 926.06,444.78 926.30,444.49 926.55,444.21 926.80,446.08 927.04,446.29 927.29,445.18 927.54,445.64 927.78,445.34 928.03,445.31 928.28,445.22 928.52,444.96 928.77,445.05 929.02,445.10" fill="none" stroke="#000000" stroke-width="1.8" stroke-linejoin="round"/>
<polyline points="584.05,445.25 584.30,445.25 584.54,445.25 584.79,445.25 585.04,445.25 585.28,445.24 585.53,445.24 585.78,445.24 586.02,445.24 586.27,445.24 586.52,445.24 586.76,445.24 587.01,445.24 587.26,445.23 587.50,445.23 587.75,445.23 588.00,445.23 588.24,445.23 588.49,445.23 588.74,445.23 588.98,445.23 589.23,445.22 589.48,445.22 589.72,445.22 589.97,445.22 590.21,445.22 590.46,445.22 590.71,445.22 590.95,445.21 591.20,445.21 591.45,445.21 591.69,445.21 591.94,445.21 592.19,445.21 592.43,445.21 592.68,445.21 592.93,445.20 593.17,445.20 593.42,445.20 593.67,445.20 593.91,445.20 594.16,445.20 594.41,445.20 594.65,445.19 594.90,445.19 595.15,445.19 595.39,445.19 595.64,445.19 595.89,445.19 596.13,445.19 596.38,445.18 596.63,445.18 596.87,445.18 597.12,445.18 597.37,445.18 597.61,445.18 597.86,445.18 598.11,445.17 598.35,445.17 598.60,445.17 598.85,445.17 599.09,445.17 599.34,445.17 599.58,445.17 599.83,445.16 600.08,445.16 600.32,445.16 600.57,445.16 600.82,445.16 601.06,445.16 601.31,445.15 601.56,445.15 601.80,445.15 602.05,445.15 602.30,445.15 602.54,445.15 602.79,445.14 603.04,445.14 603.28,445.14 603.53,445.14 603.78,445.14 604.02,445.14 604.27,445.13 604.52,445.13 604.76,445.13 605.01,445.13 605.26,445.13 605.50,445.13 605.75,445.12 606.00,445.12 606.24,445.12 606.49,445.12 606.74,445.12 606.98,445.12 607.23,445.11 607.48,445.11 607.72,445.11 607.97,445.11 608.22,445.11 608.46,445.11 608.71,445.10 608.95,445.10 609.20,445.10 609.45,445.10 609.69,445.10 609.94,445.09 610.19,445.09 610.43,445.09 610.68,445.09 610.93,445.09 611.17,445.09 611.42,445.08 611.67,445.08 611.91,445.08 612.16,445.08 612.41,445.08 612.65,445.07 612.90,445.07 613.15,445.07 613.39,445.07 613.64,445.07 613.89,445.06 614.13,445.06 614.38,445.06 614.63,445.06 614.87,445.06 615.12,445.05 615.37,445.05 615.61,445.05 615.86,445.05 616.11,445.05 616.35,445.04 616.60,445.04 616.85,445.04 617.09,445.04 617.34,445.04 617.59,445.03 617.83,445.03 618.08,445.03 618.32,445.03 618.57,445.02 618.82,445.02 619.06,445.02 619.31,445.02 619.56,445.02 619.80,445.01 620.05,445.01 620.30,445.01 620.54,445.01 620.79,445.00 621.04,445.00 621.28,445.00 621.53,445.00 621.78,445.00 622.02,444.99 622.27,444.99 622.52,444.99 622.76,444.99 623.01,444.98 623.26,444.98 623.50,444.98 623.75,444.98 624.00,444.97 624.24,444.97 624.49,444.97 624.74,444.97 624.98,444.96 625.23,444.96 625.48,444.96 625.72,444.96 625.97,444.95 626.22,444.95 626.46,444.95 626.71,444.95 626.96,444.94 627.20,444.94 627.45,444.94 627.70,444.94 627.94,444.93 628.19,444.93 628.43,444.93 628.68,444.93 628.93,444.92 629.17,444.92 629.42,444.92 629.67,444.92 629.91,444.91 630.16,444.91 630.41,444.91 630.65,444.90 630.90,444.90 631.15,444.90 631.39,444.90 631.64,444.89 631.89,444.89 632.13,444.89 632.38,444.88 632.63,444.88 632.87,444.88 633.12,444.88 633.37,444.87 633.61,444.87 633.86,444.87 634.11,444.86 634.35,444.86 634.60,444.86 634.85,444.85 635.09,444.85 635.34,444.85 635.59,444.85 635.83,444.84 636.08,444.84 636.33,444.84 636.57,444.83 636.82,444.83 637.07,444.83 637.31,444.82 637.56,444.82 637.80,444.82 638.05,444.81 638.30,444.81 638.54,444.81 638.79,444.80 639.04,444.80 639.28,444.80 639.53,444.79 639.78,444.79 640.02,444.79 640.27,444.78 640.52,444.78 640.76,444.78 641.01,444.77 641.26,444.77 641.50,444.77 641.75,444.76 642.00,444.76 642.24,444.76 642.49,444.75 642.74,444.75 642.98,444.75 643.23,444.74 643.48,444.74 643.72,444.73 643.97,444.73 644.22,444.73 644.46,444.72 644.71,444.72 644.96,444.72 645.20,444.71 645.45,444.71 645.70,444.70 645.94,444.70 646.19,444.70 646.44,444.69 646.68,444.69 646.93,444.68 647.17,444.68 647.42,444.68 647.67,444.67 647.91,444.67 648.16,444.66 648.41,444.66 648.65,444.66 648.90,444.65 649.15,444.65 649.39,444.64 649.64,444.64 649.89,444.64 650.13,444.63 650.38,444.63 650.63,444.62 650.87,444.62 651.12,444.61 651.37,444.61 651.61,444.61 651.86,444.60 652.11,444.60 652.35,444.59 652.60,444.59 652.85,444.58 653.09,444.58 653.34,444.57 653.59,444.57 653.83,444.56 654.08,444.56 654.33,444.55 654.57,444.55 654.82,444.54 655.07,444.54 655.31,444.54 655.56,444.53 655.81,444.53 656.05,444.52 656.30,444.52 656.54,444.51 656.79,444.51 657.04,444.50 657.28,444.50 657.53,444.49 657.78,444.48 658.02,444.48 658.27,444.47 658.52,444.47 658.76,444.46 659.01,444.46 659.26,444.45 659.50,444.45 659.75,444.44 660.00,444.44 660.24,444.43 660.49,444.43 660.74,444.42 660.98,444.41 661.23,444.41 661.48,444.40 661.72,444.40 661.97,444.39 662.22,444.39 662.46,444.38 662.71,444.37 662.96,444.37 663.20,444.36 663.45,444.36 663.70,444.35 663.94,444.34 664.19,444.34 664.44,444.33 664.68,444.33 664.93,444.32 665.18,444.31 665.42,444.31 665.67,444.30 665.91,444.29 666.16,444.29 666.41,444.28 666.65,444.27 666.90,444.27 667.15,444.26 667.39,444.25 667.64,444.25 667.89,444.24 668.13,444.23 668.38,444.23 668.63,444.22 668.87,444.21 669.12,444.21 669.37,444.20 669.61,444.19 669.86,444.18 670.11,444.18 670.35,444.17 670.60,444.16 670.85,444.16 671.09,444.15 671.34,444.14 671.59,444.13 671.83,444.13 672.08,444.12 672.33,444.11 672.57,444.10 672.82,444.09 673.07,444.09 673.31,444.08 673.56,444.07 673.81,444.06 674.05,444.05 674.30,444.05 674.55,444.04 674.79,444.03 675.04,444.02 675.28,444.01 675.53,444.00 675.78,444.00 676.02,443.99 676.27,443.98 676.52,443.97 676.76,443.96 677.01,443.95 677.26,443.94 677.50,443.93 677.75,443.93 678.00,443.92 678.24,443.91 678.49,443.90 678.74,443.89 678.98,443.88 679.23,443.87 679.48,443.86 679.72,443.85 679.97,443.84 680.22,443.83 680.46,443.82 680.71,443.81 680.96,443.80 681.20,443.79 681.45,443.78 681.70,443.77 681.94,443.76 682.19,443.75 682.44,443.74 682.68,443.73 682.93,443.72 683.18,443.71 683.42,443.70 683.67,443.69 683.92,443.67 684.16,443.66 684.41,443.65 684.65,443.64 684.90,443.63 685.15,443.62 685.39,443.61 685.64,443.59 685.89,443.58 686.13,443.57 686.38,443.56 686.63,443.55 686.87,443.54 687.12,443.52 687.37,443.51 687.61,443.50 687.86,443.49 688.11,443.47 688.35,443.46 688.60,443.45 688.85,443.43 689.09,443.42 689.34,443.41 689.59,443.39 689.83,443.38 690.08,443.37 690.33,443.35 690.57,443.34 690.82,443.33 691.07,443.31 691.31,443.30 691.56,443.28 691.81,443.27 692.05,443.25 692.30,443.24 692.55,443.22 692.79,443.21 693.04,443.19 693.29,443.18 693.53,443.16 693.78,443.15 694.03,443.13 694.27,443.12 694.52,443.10 694.76,443.09 695.01,443.07 695.26,443.05 695.50,443.04 695.75,443.02 696.00,443.00 696.24,442.99 696.49,442.97 696.74,442.95 696.98,442.93 697.23,442.92 697.48,442.90 697.72,442.88 697.97,442.86 698.22,442.84 698.46,442.83 698.71,442.81 698.96,442.79 699.20,442.77 699.45,442.75 699.70,442.73 699.94,442.71 700.19,442.69 700.44,442.67 700.68,442.65 700.93,442.63 701.18,442.61 701.42,442.59 701.67,442.57 701.92,442.55 702.16,442.53 702.41,442.50 702.66,442.48 702.90,442.46 703.15,442.44 703.40,442.42 703.64,442.39 703.89,442.37 704.13,442.35 704.38,442.32 704.63,442.30 704.87,442.28 705.12,442.25 705.37,442.23 705.61,442.20 705.86,442.18 706.11,442.15 706.35,442.13 706.60,442.10 706.85,442.08 707.09,442.05 707.34,442.02 707.59,442.00 707.83,441.97 708.08,441.94 708.33,441.91 708.57,441.89 708.82,441.86 709.07,441.83 709.31,441.80 709.56,441.77 709.81,441.74 710.05,441.71 710.30,441.68 710.55,441.65 710.79,441.62 711.04,441.59 711.29,441.56 711.53,441.53 711.78,441.49 712.03,441.46 712.27,441.43 712.52,441.40 712.77,441.36 713.01,441.33 713.26,441.29 713.50,441.26 713.75,441.22 714.00,441.19 714.24,441.15 714.49,441.11 714.74,441.08 714.98,441.04 715.23,441.00 715.48,440.96 715.72,440.93 715.97,440.89 716.22,440.85 716.46,440.81 716.71,440.77 716.96,440.72 717.20,440.68 717.45,440.64 717.70,440.60 717.94,440.55 718.19,440.51 718.44,440.47 718.68,440.42 718.93,440.38 719.18,440.33 719.42,440.28 719.67,440.24 719.92,440.19 720.16,440.14 720.41,440.09 720.66,440.04 720.90,439.99 721.15,439.94 721.40,439.89 721.64,439.84 721.89,439.78 722.14,439.73 722.38,439.68 722.63,439.62 722.87,439.57 723.12,439.51 723.37,439.45 723.61,439.40 723.86,439.34 724.11,439.28 724.35,439.22 724.60,439.16 724.85,439.09 725.09,439.03 725.34,438.97 725.59,438.90 725.83,438.84 726.08,438.77 726.33,438.70 726.57,438.64 726.82,438.57 727.07,438.50 727.31,438.43 727.56,438.35 727.81,438.28 728.05,438.21 728.30,438.13 728.55,438.05 728.79,437.98 729.04,437.90 729.29,437.82 729.53,437.74 729.78,437.66 730.03,437.57 730.27,437.49 730.52,437.40 730.77,437.32 731.01,437.23 731.26,437.14 731.51,437.05 731.75,436.96 732.00,436.86 732.24,436.77 732.49,436.67 732.74,436.57 732.98,436.47 733.23,436.37 733.48,436.27 733.72,436.17 733.97,436.06 734.22,435.95 734.46,435.84 734.71,435.73 734.96,435.62 735.20,435.51 735.45,435.39 735.70,435.27 735.94,435.15 736.19,435.03 736.44,434.90 736.68,434.78 736.93,434.65 737.18,434.52 737.42,434.39 737.67,434.25 737.92,434.12 738.16,433.98 738.41,433.84 738.66,433.69 738.90,433.54 739.15,433.39 739.40,433.24 739.64,433.09 739.89,432.93 740.14,432.77 740.38,432.61 740.63,432.44 740.88,432.27 741.12,432.10 741.37,431.92 741.61,431.74 741.86,431.56 742.11,431.37 742.35,431.18 742.60,430.98 742.85,430.78 743.09,430.58 743.34,430.37 743.59,430.15 743.83,429.93 744.08,429.71 744.33,429.48 744.57,429.24 744.82,429.00 745.07,428.75 745.31,428.49 745.56,428.23 745.81,427.96 746.05,427.68 746.30,427.39 746.55,427.09 746.79,426.79 747.04,426.47 747.29,426.14 747.53,425.81 747.78,425.45 748.03,425.09 748.27,424.72 748.52,424.33 748.77,423.92 749.01,423.50 749.26,423.06 749.51,422.61 749.75,422.13 750.00,421.64 750.25,421.12 750.49,420.59 750.74,420.03 750.98,419.44 751.23,418.84 751.48,418.20 751.72,417.54 751.97,416.84 752.22,416.12 752.46,415.36 752.71,414.57 752.96,413.75 753.20,412.88 753.45,411.98 753.70,411.04 753.94,410.06 754.19,409.04 754.44,407.97 754.68,406.85 754.93,405.69 755.18,404.48 755.42,403.22 755.67,401.91 755.92,400.54 756.16,399.13 756.41,397.65 756.66,396.12 756.90,394.54 757.15,392.90 757.40,391.20 757.64,389.44 757.89,387.62 758.14,385.74 758.38,383.81 758.63,381.81 758.88,379.76 759.12,377.65 759.37,375.48 759.62,373.26 759.86,370.99 760.11,368.66 760.35,366.28 760.60,363.85 760.85,361.38 761.09,358.86 761.34,356.31 761.59,353.71 761.83,351.08 762.08,348.43 762.33,345.74 762.57,343.04 762.82,340.31 763.07,337.58 763.31,334.84 763.56,332.09 763.81,329.35 764.05,326.62 764.30,323.90 764.55,321.21 764.79,318.54 765.04,315.90 765.29,313.30 765.53,310.75 765.78,308.25 766.03,305.81 766.27,303.43 766.52,301.13 766.77,298.90 767.01,296.75 767.26,294.70 767.51,292.74 767.75,290.88 768.00,289.12 768.25,287.48 768.49,285.95 768.74,284.55 768.99,283.27 769.23,282.11 769.48,281.10 769.73,280.21 769.97,279.47 770.22,278.86 770.46,278.40 770.71,278.08 770.96,277.91 771.20,277.89 771.45,278.01 771.70,278.27 771.94,278.68 772.19,279.23 772.44,279.93 772.68,280.76 772.93,281.73 773.18,282.83 773.42,284.07 773.67,285.43 773.92,286.91 774.16,288.51 774.41,290.23 774.66,292.05 774.90,293.98 775.15,296.00 775.40,298.11 775.64,300.31 775.89,302.59 776.14,304.94 776.38,307.36 776.63,309.84 776.88,312.37 777.12,314.96 777.37,317.58 777.62,320.24 777.86,322.92 778.11,325.63 778.36,328.36 778.60,331.10 778.85,333.84 779.10,336.59 779.34,339.32 779.59,342.05 779.83,344.76 780.08,347.46 780.33,350.12 780.57,352.76 780.82,355.37 781.07,357.94 781.31,360.47 781.56,362.96 781.81,365.41 782.05,367.80 782.30,370.15 782.55,372.44 782.79,374.68 783.04,376.87 783.29,379.00 783.53,381.07 783.78,383.09 784.03,385.05 784.27,386.95 784.52,388.78 784.77,390.56 785.01,392.29 785.26,393.95 785.51,395.56 785.75,397.11 786.00,398.60 786.25,400.04 786.49,401.42 786.74,402.75 786.99,404.03 787.23,405.26 787.48,406.44 787.73,407.57 787.97,408.65 788.22,409.69 788.47,410.69 788.71,411.65 788.96,412.56 789.20,413.44 789.45,414.28 789.70,415.08 789.94,415.85 790.19,416.58 790.44,417.29 790.68,417.96 790.93,418.61 791.18,419.23 791.42,419.82 791.67,420.39 791.92,420.93 792.16,421.45 792.41,421.96 792.66,422.44 792.90,422.90 793.15,423.34 793.40,423.77 793.64,424.18 793.89,424.58 794.14,424.96 794.38,425.32 794.63,425.68 794.88,426.02 795.12,426.35 795.37,426.67 795.62,426.98 795.86,427.28 796.11,427.58 796.36,427.86 796.60,428.13 796.85,428.40 797.10,428.66 797.34,428.91 797.59,429.15 797.84,429.39 798.08,429.62 798.33,429.85 798.57,430.07 798.82,430.29 799.07,430.50 799.31,430.71 799.56,430.91 799.81,431.11 800.05,431.30 800.30,431.49 800.55,431.67 800.79,431.85 801.04,432.03 801.29,432.21 801.53,432.38 801.78,432.55 802.03,432.71 802.27,432.87 802.52,433.03 802.77,433.19 803.01,433.34 803.26,433.49 803.51,433.64 803.75,433.78 804.00,433.93 804.25,434.07 804.49,434.20 804.74,434.34 804.99,434.47 805.23,434.60 805.48,434.73 805.73,434.86 805.97,434.98 806.22,435.11 806.47,435.23 806.71,435.35 806.96,435.46 807.21,435.58 807.45,435.69 807.70,435.80 807.94,435.91 808.19,436.02 808.44,436.13 808.68,436.23 808.93,436.34 809.18,436.44 809.42,436.54 809.67,436.64 809.92,436.73 810.16,436.83 810.41,436.92 810.66,437.01 810.90,437.11 811.15,437.20 811.40,437.28 811.64,437.37 811.89,437.46 812.14,437.54 812.38,437.63 812.63,437.71 812.88,437.79 813.12,437.87 813.37,437.95 813.62,438.03 813.86,438.10 814.11,438.18 814.36,438.25 814.60,438.33 814.85,438.40 815.10,438.47 815.34,438.54 815.59,438.61 815.84,438.68 816.08,438.75 816.33,438.81 816.58,438.88 816.82,438.94 817.07,439.01 817.31,439.07 817.56,439.13 817.81,439.19 818.05,439.26 818.30,439.31 818.55,439.37 818.79,439.43 819.04,439.49 819.29,439.55 819.53,439.60 819.78,439.66 820.03,439.71 820.27,439.77 820.52,439.82 820.77,439.87 821.01,439.92 821.26,439.97 821.51,440.02 821.75,440.07 822.00,440.12 822.25,440.17 822.49,440.22 822.74,440.27 822.99,440.31 823.23,440.36 823.48,440.41 823.73,440.45 823.97,440.50 824.22,440.54 824.47,440.58 824.71,440.63 824.96,440.67 825.21,440.71 825.45,440.75 825.70,440.79 825.95,440.83 826.19,440.87 826.44,440.91 826.68,440.95 826.93,440.99 827.18,441.03 827.42,441.06 827.67,441.10 827.92,441.14 828.16,441.17 828.41,441.21 828.66,441.25 828.90,441.28 829.15,441.32 829.40,441.35 829.64,441.38 829.89,441.42 830.14,441.45 830.38,441.48 830.63,441.52 830.88,441.55 831.12,441.58 831.37,441.61 831.62,441.64 831.86,441.67 832.11,441.70 832.36,441.73 832.60,441.76 832.85,441.79 833.10,441.82 833.34,441.85 833.59,441.88 833.84,441.90 834.08,441.93 834.33,441.96 834.58,441.99 834.82,442.01 835.07,442.04 835.32,442.07 835.56,442.09 835.81,442.12 836.06,442.14 836.30,442.17 836.55,442.19 836.79,442.22 837.04,442.24 837.29,442.27 837.53,442.29 837.78,442.32 838.03,442.34 838.27,442.36 838.52,442.39 838.77,442.41 839.01,442.43 839.26,442.45 839.51,442.47 839.75,442.50 840.00,442.52 840.25,442.54 840.49,442.56 840.74,442.58 840.99,442.60 841.23,442.62 841.48,442.64 841.73,442.66 841.97,442.68 842.22,442.70 842.47,442.72 842.71,442.74 842.96,442.76 843.21,442.78 843.45,442.80 843.70,442.82 843.95,442.84 844.19,442.86 844.44,442.87 844.69,442.89 844.93,442.91 845.18,442.93 845.43,442.95 845.67,442.96 845.92,442.98 846.16,443.00 846.41,443.01 846.66,443.03 846.90,443.05 847.15,443.06 847.40,443.08 847.64,443.10 847.89,443.11 848.14,443.13 848.38,443.14 848.63,443.16 848.88,443.17 849.12,443.19 849.37,443.20 849.62,443.22 849.86,443.23 850.11,443.25 850.36,443.26 850.60,443.28 850.85,443.29 851.10,443.31 851.34,443.32 851.59,443.33 851.84,443.35 852.08,443.36 852.33,443.38 852.58,443.39 852.82,443.40 853.07,443.42 853.32,443.43 853.56,443.44 853.81,443.46 854.06,443.47 854.30,443.48 854.55,443.49 854.80,443.51 855.04,443.52 855.29,443.53 855.53,443.54 855.78,443.56 856.03,443.57 856.27,443.58 856.52,443.59 856.77,443.60 857.01,443.61 857.26,443.63 857.51,443.64 857.75,443.65 858.00,443.66 858.25,443.67 858.49,443.68 858.74,443.69 858.99,443.70 859.23,443.71 859.48,443.73 859.73,443.74 859.97,443.75 860.22,443.76 860.47,443.77 860.71,443.78 860.96,443.79 861.21,443.80 861.45,443.81 861.70,443.82 861.95,443.83 862.19,443.84 862.44,443.85 862.69,443.86 862.93,443.87 863.18,443.88 863.43,443.89 863.67,443.89 863.92,443.90 864.17,443.91 864.41,443.92 864.66,443.93 864.90,443.94 865.15,443.95 865.40,443.96 865.64,443.97 865.89,443.98 866.14,443.98 866.38,443.99 866.63,444.00 866.88,444.01 867.12,444.02 867.37,444.03 867.62,444.04 867.86,444.04 868.11,444.05 868.36,444.06 868.60,444.07 868.85,444.08 869.10,444.08 869.34,444.09 869.59,444.10 869.84,444.11 870.08,444.12 870.33,444.12 870.58,444.13 870.82,444.14 871.07,444.15 871.32,444.15 871.56,444.16 871.81,444.17 872.06,444.18 872.30,444.18 872.55,444.19 872.80,444.20 873.04,444.20 873.29,444.21 873.54,444.22 873.78,444.22 874.03,444.23 874.27,444.24 874.52,444.25 874.77,444.25 875.01,444.26 875.26,444.27 875.51,444.27 875.75,444.28 876.00,444.29 876.25,444.29 876.49,444.30 876.74,444.30 876.99,444.31 877.23,444.32 877.48,444.32 877.73,444.33 877.97,444.34 878.22,444.34 878.47,444.35 878.71,444.35 878.96,444.36 879.21,444.37 879.45,444.37 879.70,444.38 879.95,444.38 880.19,444.39 880.44,444.40 880.69,444.40 880.93,444.41 881.18,444.41 881.43,444.42 881.67,444.42 881.92,444.43 882.17,444.43 882.41,444.44 882.66,444.45 882.91,444.45 883.15,444.46 883.40,444.46 883.64,444.47 883.89,444.47 884.14,444.48 884.38,444.48 884.63,444.49 884.88,444.49 885.12,444.50 885.37,444.50 885.62,444.51 885.86,444.51 886.11,444.52 886.36,444.52 886.60,444.53 886.85,444.53 887.10,444.54 887.34,444.54 887.59,444.55 887.84,444.55 888.08,444.56 888.33,444.56 888.58,444.57 888.82,444.57 889.07,444.58 889.32,444.58 889.56,444.59 889.81,444.59 890.06,444.59 890.30,444.60 890.55,444.60 890.80,444.61 891.04,444.61 891.29,444.62 891.54,444.62 891.78,444.63 892.03,444.63 892.28,444.63 892.52,444.64 892.77,444.64 893.01,444.65 893.26,444.65 893.51,444.66 893.75,444.66 894.00,444.66 894.25,444.67 894.49,444.67 894.74,444.68 894.99,444.68 895.23,444.68 895.48,444.69 895.73,444.69 895.97,444.70 896.22,444.70 896.47,444.70 896.71,444.71 896.96,444.71 897.21,444.71 897.45,444.72 897.70,444.72 897.95,444.73 898.19,444.73 898.44,444.73 898.69,444.74 898.93,444.74 899.18,444.74 899.43,444.75 899.67,444.75 899.92,444.76 900.17,444.76 900.41,444.76 900.66,444.77 900.91,444.77 901.15,444.77 901.40,444.78 901.65,444.78 901.89,444.78 902.14,444.79 902.39,444.79 902.63,444.79 902.88,444.80 903.12,444.80 903.37,444.80 903.62,444.81 903.86,444.81 904.11,444.81 904.36,444.82 904.60,444.82 904.85,444.82 905.10,444.83 905.34,444.83 905.59,444.83 905.84,444.84 906.08,444.84 906.33,444.84 906.58,444.84 906.82,444.85 907.07,444.85 907.32,444.85 907.56,444.86 907.81,444.86 908.06,444.86 908.30,444.87 908.55,444.87 908.80,444.87 909.04,444.87 909.29,444.88 909.54,444.88 909.78,444.88 910.03,444.89 910.28,444.89 910.52,444.89 910.77,444.89 911.02,444.90 911.26,444.90 911.51,444.90 911.76,444.91 912.00,444.91 912.25,444.91 912.49,444.91 912.74,444.92 912.99,444.92 913.23,444.92 913.48,444.92 913.73,444.93 913.97,444.93 914.22,444.93 914.47,444.94 914.71,444.94 914.96,444.94 915.21,444.94 915.45,444.95 915.70,444.95 915.95,444.95 916.19,444.95 916.44,444.96 916.69,444.96 916.93,444.96 917.18,444.96 917.43,444.97 917.67,444.97 917.92,444.97 918.17,444.97 918.41,444.98 918.66,444.98 918.91,444.98 919.15,444.98 919.40,444.99 919.65,444.99 919.89,444.99 920.14,444.99 920.39,444.99 920.63,445.00 920.88,445.00 921.13,445.00 921.37,445.00 921.62,445.01 921.86,445.01 922.11,445.01 922.36,445.01 922.60,445.01 922.85,445.02 923.10,445.02 923.34,445.02 923.59,445.02 923.84,445.03 924.08,445.03 924.33,445.03 924.58,445.03 924.82,445.03 925.07,445.04 925.32,445.04 925.56,445.04 925.81,445.04 926.06,445.04 926.30,445.05 926.55,445.05 926.80,445.05 927.04,445.05 927.29,445.06 927.54,445.06 927.78,445.06 928.03,445.06 928.28,445.06 928.52,445.07 928.77,445.07 929.02,445.07" fill="none" stroke="#ff0000" stroke-width="2.0" stroke-linejoin="round"/>
<line x1="584.5" y1="457" x2="584.5" y2="258" stroke="#000" stroke-width="1.2" stroke-dasharray="4.4,1.9"/>
<line x1="764.5" y1="457" x2="764.5" y2="258" stroke="#ff0000" stroke-width="1.2" stroke-dasharray="4.4,1.9"/>
<line x1="778.5" y1="457" x2="778.5" y2="258" stroke="#ff0000" stroke-width="1.2" stroke-dasharray="4.4,1.9"/>
<line x1="567" y1="446.2" x2="946" y2="446.2" stroke="#008000" stroke-width="1.5" stroke-dasharray="5.5,2.4"/>
</g>
<path d="M567.5 456.5 L946 456.5 M567.5 258.5 L946 258.5 M567.5 258 L567.5 457" stroke="#000" stroke-width="1" fill="none"/>
<line x1="562" y1="447.5" x2="567.5" y2="447.5" stroke="#000" stroke-width="1"/>
<line x1="562" y1="406.5" x2="567.5" y2="406.5" stroke="#000" stroke-width="1"/>
<line x1="562" y1="365.5" x2="567.5" y2="365.5" stroke="#000" stroke-width="1"/>
<line x1="562" y1="325.5" x2="567.5" y2="325.5" stroke="#000" stroke-width="1"/>
<line x1="562" y1="284.5" x2="567.5" y2="284.5" stroke="#000" stroke-width="1"/>
<line x1="612.5" y1="456.5" x2="612.5" y2="462" stroke="#000" stroke-width="1"/>
<line x1="691.5" y1="456.5" x2="691.5" y2="462" stroke="#000" stroke-width="1"/>
<line x1="771.5" y1="456.5" x2="771.5" y2="462" stroke="#000" stroke-width="1"/>
<line x1="851.5" y1="456.5" x2="851.5" y2="462" stroke="#000" stroke-width="1"/>
<line x1="930.5" y1="456.5" x2="930.5" y2="462" stroke="#000" stroke-width="1"/>
<rect x="844" y="265.5" width="95.5" height="43" rx="2.5" fill="#ffffff" fill-opacity="0.8" stroke="#cccccc" stroke-width="1"/>
<line x1="847.5" y1="274.5" x2="876" y2="274.5" stroke="#000" stroke-width="2"/>
<line x1="847.5" y1="295" x2="876" y2="295" stroke="#ff0000" stroke-width="2"/>
<g clip-path="url(#cbot)">
<polyline points="572.97,544.01 573.22,542.95 573.47,544.50 573.73,544.55 573.98,540.65 574.24,541.53 574.49,543.55 574.75,543.26 575.00,542.50 575.26,541.76 575.51,542.13 575.76,545.70 576.02,543.26 576.27,543.34 576.53,541.59 576.78,542.31 577.04,546.80 577.29,544.27 577.54,541.09 577.80,544.37 578.05,544.53 578.31,542.95 578.56,538.63 578.82,545.28 579.07,544.59 579.33,543.50 579.58,543.22 579.83,542.87 580.09,543.69 580.34,541.59 580.60,544.80 580.85,544.99 581.11,547.39 581.36,546.60 581.62,545.03 581.87,542.81 582.12,545.67 582.38,543.50 582.63,545.35 582.89,543.16 583.14,547.38 583.40,544.00 583.65,546.10 583.90,545.21 584.16,545.74 584.41,543.23 584.67,543.09 584.92,544.87 585.18,543.16 585.43,541.56 585.69,543.57 585.94,543.29 586.19,543.70 586.45,542.10 586.70,541.59 586.96,545.13 587.21,546.12 587.47,543.64 587.72,542.48 587.97,544.72 588.23,542.32 588.48,543.69 588.74,543.60 588.99,542.62 589.25,542.33 589.50,545.19 589.76,543.71 590.01,547.32 590.26,544.71 590.52,545.60 590.77,545.79 591.03,541.97 591.28,542.52 591.54,542.58 591.79,542.08 592.04,544.47 592.30,544.66 592.55,545.13 592.81,544.82 593.06,543.31 593.32,543.59 593.57,545.51 593.83,542.37 594.08,542.98 594.33,542.06 594.59,540.76 594.84,545.26 595.10,542.31 595.35,543.87 595.61,542.21 595.86,543.36 596.12,540.19 596.37,543.85 596.62,540.46 596.88,543.61 597.13,542.39 597.39,543.47 597.64,544.86 597.90,542.72 598.15,543.41 598.40,546.17 598.66,544.56 598.91,543.71 599.17,545.15 599.42,544.43 599.68,543.71 599.93,541.89 600.19,542.07 600.44,544.60 600.69,541.10 600.95,544.50 601.20,542.91 601.46,542.15 601.71,546.18 601.97,545.29 602.22,544.29 602.47,543.29 602.73,543.95 602.98,542.56 603.24,546.31 603.49,547.28 603.75,545.53 604.00,543.06 604.26,542.50 604.51,544.08 604.76,543.86 605.02,543.46 605.27,544.61 605.53,544.31 605.78,543.66 606.04,545.62 606.29,546.55 606.55,540.97 606.80,542.01 607.05,542.88 607.31,542.72 607.56,541.49 607.82,544.34 608.07,544.11 608.33,542.80 608.58,544.96 608.83,541.46 609.09,542.78 609.34,544.68 609.60,543.30 609.85,544.25 610.11,544.05 610.36,543.63 610.62,542.49 610.87,542.56 611.12,544.84 611.38,542.42 611.63,544.10 611.89,546.35 612.14,542.89 612.40,546.16 612.65,544.20 612.90,541.87 613.16,541.58 613.41,543.99 613.67,544.27 613.92,543.77 614.18,546.62 614.43,540.16 614.69,544.86 614.94,541.20 615.19,543.76 615.45,541.54 615.70,540.39 615.96,542.33 616.21,539.88 616.47,544.69 616.72,542.36 616.97,545.00 617.23,545.57 617.48,544.34 617.74,545.08 617.99,544.95 618.25,542.83 618.50,544.47 618.76,544.49 619.01,544.16 619.26,545.08 619.52,540.61 619.77,541.52 620.03,541.41 620.28,545.16 620.54,544.59 620.79,544.19 621.05,544.01 621.30,544.75 621.55,544.74 621.81,542.11 622.06,543.07 622.32,542.30 622.57,541.98 622.83,545.22 623.08,545.88 623.33,541.32 623.59,543.07 623.84,541.60 624.10,544.45 624.35,542.97 624.61,544.46 624.86,545.45 625.12,544.87 625.37,547.94 625.62,543.73 625.88,544.74 626.13,543.69 626.39,541.00 626.64,542.43 626.90,544.30 627.15,541.35 627.40,543.68 627.66,541.02 627.91,544.88 628.17,542.42 628.42,541.29 628.68,543.87 628.93,544.19 629.19,542.63 629.44,545.06 629.69,546.53 629.95,542.35 630.20,541.67 630.46,541.52 630.71,543.25 630.97,544.00 631.22,543.03 631.47,544.93 631.73,546.37 631.98,545.19 632.24,540.92 632.49,544.37 632.75,547.53 633.00,545.20 633.26,542.96 633.51,543.36 633.76,543.25 634.02,545.71 634.27,543.40 634.53,541.73 634.78,544.45 635.04,541.54 635.29,545.20 635.55,542.59 635.80,543.73 636.05,542.21 636.31,543.89 636.56,540.90 636.82,545.17 637.07,543.64 637.33,544.81 637.58,542.56 637.83,545.39 638.09,543.73 638.34,544.29 638.60,545.47 638.85,542.46 639.11,545.13 639.36,541.85 639.62,543.53 639.87,539.73 640.12,544.79 640.38,544.95 640.63,543.70 640.89,542.38 641.14,543.92 641.40,542.43 641.65,542.51 641.90,543.47 642.16,547.70 642.41,542.91 642.67,543.05 642.92,543.71 643.18,545.46 643.43,544.73 643.69,543.50 643.94,544.03 644.19,543.36 644.45,543.77 644.70,543.06 644.96,544.73 645.21,541.55 645.47,545.17 645.72,547.75 645.97,541.08 646.23,544.65 646.48,542.42 646.74,543.87 646.99,542.47 647.25,545.27 647.50,542.05 647.76,542.96 648.01,543.46 648.26,540.64 648.52,540.63 648.77,543.73 649.03,541.48 649.28,539.89 649.54,545.55 649.79,543.69 650.05,543.63 650.30,542.31 650.55,542.65 650.81,540.60 651.06,547.06 651.32,544.62 651.57,543.83 651.83,541.06 652.08,541.27 652.33,543.15 652.59,542.20 652.84,542.40 653.10,543.71 653.35,542.26 653.61,543.61 653.86,539.02 654.12,540.32 654.37,543.07 654.62,541.59 654.88,539.04 655.13,543.10 655.39,544.55 655.64,542.24 655.90,540.44 656.15,545.40 656.40,543.08 656.66,544.12 656.91,542.61 657.17,545.54 657.42,544.94 657.68,537.96 657.93,544.03 658.19,544.14 658.44,541.57 658.69,544.88 658.95,541.59 659.20,540.83 659.46,541.47 659.71,544.20 659.97,544.38 660.22,539.88 660.47,542.50 660.73,540.46 660.98,541.47 661.24,543.66 661.49,542.74 661.75,544.75 662.00,542.94 662.26,544.78 662.51,540.54 662.76,541.41 663.02,540.22 663.27,540.76 663.53,543.38 663.78,544.21 664.04,543.86 664.29,540.23 664.55,541.67 664.80,542.30 665.05,540.59 665.31,544.65 665.56,542.99 665.82,540.01 666.07,545.53 666.33,544.41 666.58,540.09 666.83,542.74 667.09,547.10 667.34,544.39 667.60,539.36 667.85,541.50 668.11,542.10 668.36,543.42 668.62,543.28 668.87,542.16 669.12,544.86 669.38,538.17 669.63,541.25 669.89,542.69 670.14,544.08 670.40,544.18 670.65,538.02 670.90,542.14 671.16,538.75 671.41,545.32 671.67,543.75 671.92,541.17 672.18,542.02 672.43,534.58 672.69,542.70 672.94,540.53 673.19,542.90 673.45,541.92 673.70,543.53 673.96,539.54 674.21,542.44 674.47,541.26 674.72,540.27 674.97,541.06 675.23,541.40 675.48,542.11 675.74,539.29 675.99,540.95 676.25,541.15 676.50,541.66 676.76,543.33 677.01,543.15 677.26,535.70 677.52,540.09 677.77,543.94 678.03,544.21 678.28,544.18 678.54,543.76 678.79,544.68 679.05,541.03 679.30,545.11 679.55,543.39 679.81,542.94 680.06,543.13 680.32,541.95 680.57,541.40 680.83,541.31 681.08,539.36 681.33,539.23 681.59,540.10 681.84,544.92 682.10,544.96 682.35,541.19 682.61,541.08 682.86,542.59 683.12,540.89 683.37,542.34 683.62,546.31 683.88,541.59 684.13,540.71 684.39,537.87 684.64,537.43 684.90,542.19 685.15,540.10 685.40,541.40 685.66,540.36 685.91,543.84 686.17,544.74 686.42,540.49 686.68,540.78 686.93,545.65 687.19,540.53 687.44,543.48 687.69,542.03 687.95,540.70 688.20,542.81 688.46,542.29 688.71,540.34 688.97,543.74 689.22,538.57 689.47,545.21 689.73,543.41 689.98,540.08 690.24,544.81 690.49,540.48 690.75,541.83 691.00,542.89 691.26,541.19 691.51,542.09 691.76,540.47 692.02,540.16 692.27,540.16 692.53,541.19 692.78,542.01 693.04,542.91 693.29,540.95 693.55,542.45 693.80,540.45 694.05,543.30 694.31,541.48 694.56,545.51 694.82,538.21 695.07,537.96 695.33,540.10 695.58,541.83 695.83,539.34 696.09,541.04 696.34,545.34 696.60,543.33 696.85,541.02 697.11,540.90 697.36,542.24 697.62,542.59 697.87,539.50 698.12,542.54 698.38,539.05 698.63,539.46 698.89,541.25 699.14,535.95 699.40,539.83 699.65,537.74 699.90,538.24 700.16,542.80 700.41,541.82 700.67,545.03 700.92,539.62 701.18,540.40 701.43,544.08 701.69,542.17 701.94,540.74 702.19,537.09 702.45,543.23 702.70,542.42 702.96,542.66 703.21,538.16 703.47,539.80 703.72,544.17 703.97,540.47 704.23,539.54 704.48,539.66 704.74,540.38 704.99,540.66 705.25,543.84 705.50,547.83 705.76,539.40 706.01,540.59 706.26,537.81 706.52,544.86 706.77,538.28 707.03,535.95 707.28,541.42 707.54,543.10 707.79,539.21 708.05,542.38 708.30,542.37 708.55,539.53 708.81,539.93 709.06,540.32 709.32,538.66 709.57,540.88 709.83,542.49 710.08,540.99 710.33,543.51 710.59,541.94 710.84,541.66 711.10,541.85 711.35,540.36 711.61,540.28 711.86,539.54 712.12,540.31 712.37,539.98 712.62,542.94 712.88,538.07 713.13,541.87 713.39,542.76 713.64,535.90 713.90,542.82 714.15,538.69 714.40,542.70 714.66,534.56 714.91,542.46 715.17,539.03 715.42,538.72 715.68,536.46 715.93,535.25 716.19,538.80 716.44,538.85 716.69,535.80 716.95,543.15 717.20,539.77 717.46,541.37 717.71,543.67 717.97,539.36 718.22,540.97 718.47,541.09 718.73,539.91 718.98,538.75 719.24,537.91 719.49,543.42 719.75,539.65 720.00,538.63 720.26,540.75 720.51,539.75 720.76,538.36 721.02,538.57 721.27,535.96 721.53,539.45 721.78,540.06 722.04,539.33 722.29,538.83 722.55,541.25 722.80,536.19 723.05,533.81 723.31,537.10 723.56,539.69 723.82,540.32 724.07,536.40 724.33,537.76 724.58,536.15 724.83,536.74 725.09,537.76 725.34,538.17 725.60,534.58 725.85,538.09 726.11,538.19 726.36,533.76 726.62,539.04 726.87,530.74 727.12,535.52 727.38,536.65 727.63,540.97 727.89,532.72 728.14,538.09 728.40,538.41 728.65,536.51 728.90,530.81 729.16,538.11 729.41,537.72 729.67,532.65 729.92,536.33 730.18,536.36 730.43,536.84 730.69,533.56 730.94,534.38 731.19,537.42 731.45,531.89 731.70,534.43 731.96,531.82 732.21,528.64 732.47,534.36 732.72,538.75 732.97,531.63 733.23,534.41 733.48,534.71 733.74,534.66 733.99,530.57 734.25,535.99 734.50,530.13 734.76,532.03 735.01,535.58 735.26,533.85 735.52,533.13 735.77,538.13 736.03,539.31 736.28,532.06 736.54,537.72 736.79,540.78 737.05,536.79 737.30,538.90 737.55,533.05 737.81,541.40 738.06,534.14 738.32,532.95 738.57,541.41 738.83,537.83 739.08,531.60 739.33,539.91 739.59,530.33 739.84,532.57 740.10,542.56 740.35,537.47 740.61,532.56 740.86,537.81 741.12,540.36 741.37,548.68 741.62,537.51 741.88,533.69 742.13,540.87 742.39,537.06 742.64,537.66 742.90,537.16 743.15,544.62 743.40,532.06 743.66,542.20 743.91,541.17 744.17,546.81 744.42,541.17 744.68,539.90 744.93,533.65 745.19,543.90 745.44,549.80 745.69,542.68 745.95,544.54 746.20,543.63 746.46,546.53 746.71,547.13 746.97,549.59 747.22,547.69 747.47,541.84 747.73,549.86 747.98,544.69 748.24,550.82 748.49,549.26 748.75,555.32 749.00,547.88 749.26,553.54 749.51,551.33 749.76,557.95 750.02,560.67 750.27,554.04 750.53,550.85 750.78,560.44 751.04,556.86 751.29,551.80 751.55,561.40 751.80,558.65 752.05,555.22 752.31,556.47 752.56,558.63 752.82,558.75 753.07,561.62 753.33,560.23 753.58,553.00 753.83,565.16 754.09,561.78 754.34,556.90 754.60,558.98 754.85,560.33 755.11,549.79 755.36,568.42 755.62,569.32 755.87,551.97 756.12,562.51 756.38,543.03 756.63,562.11 756.89,552.26 757.14,555.61 757.40,564.26 757.65,542.48 757.90,552.99 758.16,545.72 758.41,554.82 758.67,557.04 758.92,541.25 759.18,548.15 759.43,550.55 759.69,544.88 759.94,554.32 760.19,529.46 760.45,538.90 760.70,535.43 760.96,538.59 761.21,519.18 761.47,523.25 761.72,513.75 761.97,498.54 762.23,482.60 762.48,485.44 762.74,499.75 762.99,483.89 763.25,488.02 763.50,470.81 763.76,487.49 764.01,486.74 764.26,492.88 764.52,491.23 764.77,499.42 765.03,516.21 765.28,501.42 765.54,528.50 765.79,528.48 766.05,533.08 766.30,535.09 766.55,543.60 766.81,527.44 767.06,531.05 767.32,523.99 767.57,524.35 767.83,518.33 768.08,490.82 768.33,513.48 768.59,504.93 768.84,511.73 769.10,495.47 769.35,463.96 769.61,471.98 769.86,478.49 770.12,489.49 770.37,484.74 770.62,479.85 770.88,508.12 771.13,501.99 771.39,507.25 771.64,510.33 771.90,534.83 772.15,531.51 772.40,527.48 772.66,553.83 772.91,548.91 773.17,560.18 773.42,556.67 773.68,552.80 773.93,558.05 774.19,564.15 774.44,558.27 774.69,551.00 774.95,564.03 775.20,569.28 775.46,561.63 775.71,574.45 775.97,566.41 776.22,559.90 776.47,571.04 776.73,565.84 776.98,555.52 777.24,564.47 777.49,552.33 777.75,559.15 778.00,570.12 778.26,565.31 778.51,555.36 778.76,553.27 779.02,555.85 779.27,551.11 779.53,554.66 779.78,564.21 780.04,550.34 780.29,552.11 780.55,548.23 780.80,551.18 781.05,545.77 781.31,548.36 781.56,550.82 781.82,548.21 782.07,544.86 782.33,543.33 782.58,535.45 782.83,540.71 783.09,549.08 783.34,544.86 783.60,542.98 783.85,542.75 784.11,544.71 784.36,550.12 784.62,548.44 784.87,536.03 785.12,539.60 785.38,543.66 785.63,538.11 785.89,540.97 786.14,541.31 786.40,544.28 786.65,540.41 786.90,537.27 787.16,536.99 787.41,537.49 787.67,539.68 787.92,545.40 788.18,543.82 788.43,539.37 788.69,535.93 788.94,541.26 789.19,540.63 789.45,541.63 789.70,551.41 789.96,547.46 790.21,537.53 790.47,539.58 790.72,546.37 790.98,540.22 791.23,547.87 791.48,545.31 791.74,541.44 791.99,539.83 792.25,543.56 792.50,543.43 792.76,539.06 793.01,540.11 793.26,545.59 793.52,536.69 793.77,540.71 794.03,544.57 794.28,543.52 794.54,543.75 794.79,538.11 795.05,544.71 795.30,539.86 795.55,541.67 795.81,545.40 796.06,539.75 796.32,544.49 796.57,546.10 796.83,541.83 797.08,542.00 797.33,536.27 797.59,546.01 797.84,543.40 798.10,538.46 798.35,534.61 798.61,540.28 798.86,540.72 799.12,539.71 799.37,543.26 799.62,543.92 799.88,536.36 800.13,542.58 800.39,536.78 800.64,540.23 800.90,543.73 801.15,545.15 801.40,545.41 801.66,545.19 801.91,542.63 802.17,538.37 802.42,544.39 802.68,543.05 802.93,543.20 803.19,536.84 803.44,544.09 803.69,540.94 803.95,545.54 804.20,540.53 804.46,537.00 804.71,539.13 804.97,540.70 805.22,539.79 805.48,542.21 805.73,540.23 805.98,537.74 806.24,539.12 806.49,539.83 806.75,543.30 807.00,543.33 807.26,543.81 807.51,538.66 807.76,543.44 808.02,536.43 808.27,538.17 808.53,540.84 808.78,541.41 809.04,541.02 809.29,545.56 809.55,543.55 809.80,543.27 810.05,542.76 810.31,544.30 810.56,544.62 810.82,545.34 811.07,544.40 811.33,542.75 811.58,539.67 811.83,541.57 812.09,540.08 812.34,543.04 812.60,542.49 812.85,540.67 813.11,539.04 813.36,541.08 813.62,541.53 813.87,541.58 814.12,543.27 814.38,538.56 814.63,544.28 814.89,537.81 815.14,539.64 815.40,539.43 815.65,542.12 815.90,540.16 816.16,545.73 816.41,545.11 816.67,543.15 816.92,544.70 817.18,543.09 817.43,543.67 817.69,543.31 817.94,541.00 818.19,543.92 818.45,543.19 818.70,543.26 818.96,539.56 819.21,542.06 819.47,542.56 819.72,542.20 819.98,545.34 820.23,542.49 820.48,539.84 820.74,541.30 820.99,544.15 821.25,547.36 821.50,543.53 821.76,542.70 822.01,540.71 822.26,541.01 822.52,544.53 822.77,541.33 823.03,536.86 823.28,543.49 823.54,538.68 823.79,544.30 824.05,540.41 824.30,544.78 824.55,542.00 824.81,543.77 825.06,538.21 825.32,544.18 825.57,536.34 825.83,543.42 826.08,541.78 826.33,542.37 826.59,544.77 826.84,540.61 827.10,538.86 827.35,544.37 827.61,539.92 827.86,543.98 828.12,546.34 828.37,542.43 828.62,541.34 828.88,541.00 829.13,542.54 829.39,537.26 829.64,542.01 829.90,540.13 830.15,543.55 830.40,542.34 830.66,540.94 830.91,541.45 831.17,546.02 831.42,541.01 831.68,538.01 831.93,543.46 832.19,542.86 832.44,542.29 832.69,542.90 832.95,542.06 833.20,541.10 833.46,541.00 833.71,546.21 833.97,539.78 834.22,538.82 834.48,543.07 834.73,542.34 834.98,542.21 835.24,542.43 835.49,546.08 835.75,543.16 836.00,539.89 836.26,537.59 836.51,544.98 836.76,541.67 837.02,544.65 837.27,542.78 837.53,544.60 837.78,545.76 838.04,544.78 838.29,544.83 838.55,541.59 838.80,542.96 839.05,545.59 839.31,545.55 839.56,544.91 839.82,542.04 840.07,543.50 840.33,541.81 840.58,543.08 840.83,543.50 841.09,545.24 841.34,540.09 841.60,543.89 841.85,544.28 842.11,540.95 842.36,543.90 842.62,541.94 842.87,540.86 843.12,544.81 843.38,541.73 843.63,547.30 843.89,541.07 844.14,541.51 844.40,541.97 844.65,544.13 844.90,544.40 845.16,543.40 845.41,537.71 845.67,545.55 845.92,544.12 846.18,541.13 846.43,543.57 846.69,543.14 846.94,540.01 847.19,543.64 847.45,542.11 847.70,544.30 847.96,542.53 848.21,544.29 848.47,538.88 848.72,543.48 848.98,546.66 849.23,543.73 849.48,542.90 849.74,546.37 849.99,542.86 850.25,541.22 850.50,543.89 850.76,539.20 851.01,539.56 851.26,542.01 851.52,543.33 851.77,544.91 852.03,543.55 852.28,544.13 852.54,543.01 852.79,543.05 853.05,540.60 853.30,545.19 853.55,544.26 853.81,541.41 854.06,543.15 854.32,543.33 854.57,541.20 854.83,539.16 855.08,542.30 855.33,542.52 855.59,545.29 855.84,542.03 856.10,541.91 856.35,540.84 856.61,542.99 856.86,542.02 857.12,542.80 857.37,542.80 857.62,544.52 857.88,543.74 858.13,542.52 858.39,538.34 858.64,544.87 858.90,541.50 859.15,542.77 859.40,542.59 859.66,543.62 859.91,539.49 860.17,540.29 860.42,542.94 860.68,544.19 860.93,544.40 861.19,543.14 861.44,541.29 861.69,541.44 861.95,543.57 862.20,544.40 862.46,544.15 862.71,545.67 862.97,545.34 863.22,544.44 863.48,543.07 863.73,543.43 863.98,544.19 864.24,542.79 864.49,546.83 864.75,545.37 865.00,543.31 865.26,544.52 865.51,545.41 865.76,542.23 866.02,542.71 866.27,545.76 866.53,544.63 866.78,544.32 867.04,546.18 867.29,542.11 867.55,546.81 867.80,541.79 868.05,542.63 868.31,545.26 868.56,541.75 868.82,544.45 869.07,542.78 869.33,545.31 869.58,544.05 869.83,544.02 870.09,544.18 870.34,547.96 870.60,542.43 870.85,544.38 871.11,544.31 871.36,544.94 871.62,546.47 871.87,543.65 872.12,544.47 872.38,539.73 872.63,544.47 872.89,544.68 873.14,544.39 873.40,543.62 873.65,541.25 873.90,541.54 874.16,547.31 874.41,543.16 874.67,546.59 874.92,542.58 875.18,546.04 875.43,543.21 875.69,545.83 875.94,544.03 876.19,544.20 876.45,541.24 876.70,547.61 876.96,544.57 877.21,541.03 877.47,541.42 877.72,542.43 877.98,543.06 878.23,542.90 878.48,542.67 878.74,543.70 878.99,544.45 879.25,544.86 879.50,543.86 879.76,544.29 880.01,544.85 880.26,543.34 880.52,543.77 880.77,546.01 881.03,545.07 881.28,542.92 881.54,544.56 881.79,541.82 882.05,544.04 882.30,542.67 882.55,542.29 882.81,542.91 883.06,541.79 883.32,547.74 883.57,542.78 883.83,543.64 884.08,549.67 884.33,545.34 884.59,544.83 884.84,544.76 885.10,543.66 885.35,545.41 885.61,543.83 885.86,544.39 886.12,541.46 886.37,544.75 886.62,544.28 886.88,543.72 887.13,543.81 887.39,542.93 887.64,543.86 887.90,544.56 888.15,543.09 888.40,545.20 888.66,543.94 888.91,542.50 889.17,545.84 889.42,543.43 889.68,542.11 889.93,541.74 890.19,544.34 890.44,541.03 890.69,542.66 890.95,542.57 891.20,542.90 891.46,544.12 891.71,542.36 891.97,544.54 892.22,541.35 892.48,542.87 892.73,542.65 892.98,543.32 893.24,542.88 893.49,541.43 893.75,542.66 894.00,542.90 894.26,544.99 894.51,545.81 894.76,544.59 895.02,540.45 895.27,545.26 895.53,543.85 895.78,543.40 896.04,542.03 896.29,545.56 896.55,543.92 896.80,540.29 897.05,544.17 897.31,543.49 897.56,543.43 897.82,544.16 898.07,544.89 898.33,539.43 898.58,543.30 898.83,543.69 899.09,543.68 899.34,542.83 899.60,544.15 899.85,544.89 900.11,544.64 900.36,538.99 900.62,542.09 900.87,541.09 901.12,542.76 901.38,541.50 901.63,542.54 901.89,545.33 902.14,540.82 902.40,545.07 902.65,543.60 902.90,540.36 903.16,538.14 903.41,542.05 903.67,541.64 903.92,546.83 904.18,539.60 904.43,542.26 904.69,544.96 904.94,548.75 905.19,545.88 905.45,546.55 905.70,539.24 905.96,544.40 906.21,545.91 906.47,543.71 906.72,544.53 906.98,542.06 907.23,544.88 907.48,540.85 907.74,545.25 907.99,544.37 908.25,543.92 908.50,544.40 908.76,547.12 909.01,544.23 909.26,542.95 909.52,545.41 909.77,542.75 910.03,543.79 910.28,541.28 910.54,542.24 910.79,544.43 911.05,542.84 911.30,545.57 911.55,544.56 911.81,542.49 912.06,546.91 912.32,539.48 912.57,542.47 912.83,542.45 913.08,546.69 913.33,543.03 913.59,544.32 913.84,546.66 914.10,544.15 914.35,545.39 914.61,543.03 914.86,541.12 915.12,542.44 915.37,541.45 915.62,545.63 915.88,545.58 916.13,546.14 916.39,542.67 916.64,542.97 916.90,545.89 917.15,542.17 917.40,543.89 917.66,542.14 917.91,544.27 918.17,542.82 918.42,544.54 918.68,543.32 918.93,543.81 919.19,544.11 919.44,544.66 919.69,545.38 919.95,541.96 920.20,542.13 920.46,544.54 920.71,545.97 920.97,542.44 921.22,545.61 921.48,541.20 921.73,543.23 921.98,542.53 922.24,544.26 922.49,542.93 922.75,545.53 923.00,546.22 923.26,540.89 923.51,543.98 923.76,545.05 924.02,543.09 924.27,544.80 924.53,546.49 924.78,544.90 925.04,543.06 925.29,540.83 925.55,543.79 925.80,544.77 926.05,546.22 926.31,543.77 926.56,542.59 926.82,545.25 927.07,546.71 927.33,542.97 927.58,543.80 927.83,541.70 928.09,542.56 928.34,545.82 928.60,546.19 928.85,542.84" fill="none" stroke="#0000ff" stroke-width="1.8" stroke-linejoin="round"/>
</g>
<path d="M555.5 580.5 L946 580.5 M555.5 501 L555.5 581" stroke="#000" stroke-width="1" fill="none"/>
<path d="M555.5 501.5 L945.5 501.5 L945.5 580" stroke="#f2f2f2" stroke-width="1" fill="none"/>
<line x1="550" y1="569.5" x2="555.5" y2="569.5" stroke="#000" stroke-width="1"/>
<line x1="550" y1="543.5" x2="555.5" y2="543.5" stroke="#000" stroke-width="1"/>
<line x1="550" y1="517.5" x2="555.5" y2="517.5" stroke="#000" stroke-width="1"/>
<line x1="602.5" y1="580.5" x2="602.5" y2="586" stroke="#000" stroke-width="1"/>
<line x1="684.5" y1="580.5" x2="684.5" y2="586" stroke="#000" stroke-width="1"/>
<line x1="766.5" y1="580.5" x2="766.5" y2="586" stroke="#000" stroke-width="1"/>
<line x1="848.5" y1="580.5" x2="848.5" y2="586" stroke="#000" stroke-width="1"/>
<line x1="930.5" y1="580.5" x2="930.5" y2="586" stroke="#000" stroke-width="1"/>
<rect x="825" y="507.5" width="114.5" height="23" rx="2.5" fill="#ffffff" fill-opacity="0.8" stroke="#cccccc" stroke-width="1"/>
<line x1="829.5" y1="517" x2="857.5" y2="517" stroke="#0000ff" stroke-width="2"/>
<circle cx="736.3" cy="490.3" r="1.6" fill="#000"/>
<circle cx="741.5" cy="490.3" r="1.6" fill="#000"/>
<circle cx="746.8" cy="490.3" r="1.6" fill="#000"/>
</svg>
<svg width="987" height="897" viewBox="0 0 987 897">
<text x="29.64" y="19.90" font-size="12.2" fill="#000000" textLength="113.59" lengthAdjust="spacingAndGlyphs" stroke="#000000" stroke-width="0.08">Indirect Data Analysis</text>
<text x="20.45" y="55.80" font-size="11.2" fill="#000000" textLength="25.38" lengthAdjust="spacingAndGlyphs" stroke="#000000" stroke-width="0.15">Elwin</text>
<text x="68.47" y="55.80" font-size="11.2" fill="#000000" textLength="37.39" lengthAdjust="spacingAndGlyphs" stroke="#000000" stroke-width="0.15">MSD Fit</text>
<text x="128.34" y="55.80" font-size="11.2" fill="#000000" textLength="33.00" lengthAdjust="spacingAndGlyphs" stroke="#000000" stroke-width="0.15">I(Q, t)</text>
<text x="183.53" y="55.80" font-size="11.2" fill="#000000" textLength="46.98" lengthAdjust="spacingAndGlyphs" stroke="#000000" stroke-width="0.15">I(Q, t) Fit</text>
<text x="314.62" y="55.80" font-size="11.2" fill="#000000" textLength="37.87" lengthAdjust="spacingAndGlyphs" stroke="#000000" stroke-width="0.15">F(Q) Fit</text>
<text x="254.16" y="54.80" font-size="11.2" fill="#000000" textLength="37.50" lengthAdjust="spacingAndGlyphs" stroke="#000000" stroke-width="0.15">ConvFit</text>
<text x="112.51" y="86.80" font-size="11.2" fill="#000000" textLength="65.87" lengthAdjust="spacingAndGlyphs" stroke="#000000" stroke-width="0.15">Multiple Input</text>
<text x="31.91" y="85.90" font-size="11.2" fill="#000000" textLength="57.87" lengthAdjust="spacingAndGlyphs" stroke="#000000" stroke-width="0.15">Single Input</text>
<text x="31.35" y="120.70" font-size="11.2" fill="#000000" textLength="33.75" lengthAdjust="spacingAndGlyphs" stroke="#000000" stroke-width="0.15">Sample</text>
<text x="90.67" y="120.70" font-size="11.2" fill="#000000" textLength="16.65" lengthAdjust="spacingAndGlyphs" stroke="#000000" stroke-width="0.15">File</text>
<text x="174.15" y="120.70" font-size="11.2" fill="#000000" textLength="366.84" lengthAdjust="spacingAndGlyphs" stroke="#000000" stroke-width="0.15">C:/Users/tgz88916/Documents/IndirectData/irs26176_graphite002_red.nxs</text>
<text x="894.43" y="120.70" font-size="11.2" fill="#000000" textLength="36.41" lengthAdjust="spacingAndGlyphs" stroke="#000000" stroke-width="0.15">Browse</text>
<text x="30.94" y="155.90" font-size="11.2" fill="#000000" textLength="50.60" lengthAdjust="spacingAndGlyphs" stroke="#000000" stroke-width="0.15">Resolution</text>
<text x="90.67" y="155.90" font-size="11.2" fill="#000000" textLength="16.65" lengthAdjust="spacingAndGlyphs" stroke="#000000" stroke-width="0.15">File</text>
<text x="174.14" y="155.90" font-size="11.2" fill="#000000" textLength="366.83" lengthAdjust="spacingAndGlyphs" stroke="#000000" stroke-width="0.15">C:/Users/tgz88916/Documents/IndirectData/irs26173_graphite002_res.nxs</text>
<text x="894.43" y="154.80" font-size="11.2" fill="#000000" textLength="36.41" lengthAdjust="spacingAndGlyphs" stroke="#000000" stroke-width="0.15">Browse</text>
<text x="96.12" y="195.00" font-size="11.2" fill="#000000" textLength="32.82" lengthAdjust="spacingAndGlyphs" stroke="#000000" stroke-width="0.15">Start X</text>
<text x="138.50" y="195.20" font-size="11.2" fill="#000000" textLength="50.29" lengthAdjust="spacingAndGlyphs" stroke="#000000" stroke-width="0.15">-0.470979</text>
<text x="240.89" y="195.00" font-size="11.2" fill="#000000" textLength="27.45" lengthAdjust="spacingAndGlyphs" stroke="#000000" stroke-width="0.15">End X</text>
<text x="277.66" y="195.20" font-size="11.2" fill="#000000" textLength="46.20" lengthAdjust="spacingAndGlyphs" stroke="#000000" stroke-width="0.15">0.395768</text>
<text x="24.22" y="242.70" font-size="11.2" fill="#000000" textLength="57.33" lengthAdjust="spacingAndGlyphs" stroke="#000000" stroke-width="0.15">Fit Function</text>
<text x="38.11" y="261.70" font-size="11.2" fill="#000000" textLength="77.55" lengthAdjust="spacingAndGlyphs" stroke="#000000" stroke-width="0.15">See full function</text>
<text x="25.34" y="289.20" font-size="11.8" fill="#000000" textLength="45.25" lengthAdjust="spacingAndGlyphs" stroke="#000000" stroke-width="0.15">Property</text>
<text x="259.14" y="289.20" font-size="11.8" fill="#000000" textLength="29.58" lengthAdjust="spacingAndGlyphs" stroke="#000000" stroke-width="0.15">Value</text>
<text x="44.57" y="309.60" font-size="12.2" fill="#000000" textLength="41.08" lengthAdjust="spacingAndGlyphs" stroke="#000000" stroke-width="0.08">Fit Type</text>
<text x="258.67" y="309.60" font-size="12.2" fill="#000000" textLength="80.88" lengthAdjust="spacingAndGlyphs" stroke="#000000" stroke-width="0.08">One Lorentzian</text>
<text x="64.81" y="328.60" font-size="12.2" fill="#000000" textLength="82.59" lengthAdjust="spacingAndGlyphs" stroke="#000000" stroke-width="0.08">f1.f1.Amplitude</text>
<text x="258.98" y="328.60" font-size="12.2" fill="#000000" textLength="118.16" lengthAdjust="spacingAndGlyphs" stroke="#000000" stroke-width="0.08">4.104471 (0.011596) [L]</text>
<text x="64.83" y="347.60" font-size="12.2" fill="#000000" textLength="86.43" lengthAdjust="spacingAndGlyphs" stroke="#000000" stroke-width="0.08">f1.f1.PeakCentre</text>
<text x="258.70" y="347.60" font-size="12.2" fill="#000000" textLength="123.37" lengthAdjust="spacingAndGlyphs" stroke="#000000" stroke-width="0.08">-0.000941 (0.000077) [L]</text>
<text x="64.82" y="366.60" font-size="12.2" fill="#000000" textLength="63.68" lengthAdjust="spacingAndGlyphs" stroke="#000000" stroke-width="0.08">f1.f1.FWHM</text>
<text x="258.76" y="366.60" font-size="12.2" fill="#000000" textLength="118.37" lengthAdjust="spacingAndGlyphs" stroke="#000000" stroke-width="0.08">0.034198 (0.000184) [L]</text>
<text x="44.54" y="385.60" font-size="12.2" fill="#000000" textLength="77.62" lengthAdjust="spacingAndGlyphs" stroke="#000000" stroke-width="0.08">Delta Function</text>
<text x="277.62" y="385.60" font-size="12.2" fill="#000000" textLength="26.82" lengthAdjust="spacingAndGlyphs" stroke="#000000" stroke-width="0.08">False</text>
<text x="45.26" y="404.60" font-size="12.2" fill="#000000" textLength="88.07" lengthAdjust="spacingAndGlyphs" stroke="#000000" stroke-width="0.08">Temp Correction</text>
<text x="277.62" y="404.60" font-size="12.2" fill="#000000" textLength="26.82" lengthAdjust="spacingAndGlyphs" stroke="#000000" stroke-width="0.08">False</text>
<text x="44.53" y="423.60" font-size="12.2" fill="#ffffff" textLength="65.03" lengthAdjust="spacingAndGlyphs" stroke="#ffffff" stroke-width="0.08">Background</text>
<text x="258.24" y="423.60" font-size="12.2" fill="#ffffff" textLength="84.38" lengthAdjust="spacingAndGlyphs" stroke="#ffffff" stroke-width="0.08">FlatBackground</text>
<text x="64.82" y="442.60" font-size="12.2" fill="#000000" textLength="27.80" lengthAdjust="spacingAndGlyphs" stroke="#000000" stroke-width="0.08">f0.A0</text>
<text x="258.76" y="442.60" font-size="12.2" fill="#000000" textLength="118.37" lengthAdjust="spacingAndGlyphs" stroke="#000000" stroke-width="0.08">0.017167 (0.000226) [L]</text>
<text x="25.34" y="496.20" font-size="11.8" fill="#000000" textLength="45.25" lengthAdjust="spacingAndGlyphs" stroke="#000000" stroke-width="0.15">Property</text>
<text x="259.14" y="496.20" font-size="11.8" fill="#000000" textLength="29.58" lengthAdjust="spacingAndGlyphs" stroke="#000000" stroke-width="0.15">Value</text>
<text x="44.48" y="516.60" font-size="12.2" fill="#000000" textLength="34.73" lengthAdjust="spacingAndGlyphs" stroke="#000000" stroke-width="0.08">Fitting</text>
<text x="258.67" y="516.60" font-size="12.2" fill="#000000" textLength="55.81" lengthAdjust="spacingAndGlyphs" stroke="#000000" stroke-width="0.08">Sequential</text>
<text x="44.54" y="535.60" font-size="12.2" fill="#000000" textLength="75.59" lengthAdjust="spacingAndGlyphs" stroke="#000000" stroke-width="0.08">Max Iterations</text>
<text x="258.76" y="535.60" font-size="12.2" fill="#000000" textLength="18.36" lengthAdjust="spacingAndGlyphs" stroke="#000000" stroke-width="0.08">500</text>
<text x="44.53" y="554.60" font-size="12.2" fill="#000000" textLength="172.07" lengthAdjust="spacingAndGlyphs" stroke="#000000" stroke-width="0.08">Minimizer Levenberg-Marquardt</text>
<text x="63.99" y="573.60" font-size="12.2" fill="#000000" textLength="33.65" lengthAdjust="spacingAndGlyphs" stroke="#000000" stroke-width="0.08">Name</text>
<text x="258.23" y="573.60" font-size="12.2" fill="#000000" textLength="116.56" lengthAdjust="spacingAndGlyphs" stroke="#000000" stroke-width="0.08">Levenberg-Marquardt</text>
<text x="65.00" y="592.60" font-size="12.2" fill="#000000" textLength="45.12" lengthAdjust="spacingAndGlyphs" stroke="#000000" stroke-width="0.08">AbsError</text>
<text x="258.76" y="592.60" font-size="12.2" fill="#000000" textLength="45.63" lengthAdjust="spacingAndGlyphs" stroke="#000000" stroke-width="0.08">0.000100</text>
<text x="64.10" y="611.60" font-size="12.2" fill="#000000" textLength="41.84" lengthAdjust="spacingAndGlyphs" stroke="#000000" stroke-width="0.08">RelError</text>
<text x="258.76" y="611.60" font-size="12.2" fill="#000000" textLength="45.63" lengthAdjust="spacingAndGlyphs" stroke="#000000" stroke-width="0.08">0.000100</text>
<text x="44.90" y="630.60" font-size="12.2" fill="#000000" textLength="74.32" lengthAdjust="spacingAndGlyphs" stroke="#000000" stroke-width="0.08">Cost Function</text>
<text x="258.29" y="630.60" font-size="12.2" fill="#000000" textLength="71.12" lengthAdjust="spacingAndGlyphs" stroke="#000000" stroke-width="0.08">Least squares</text>
<text x="44.56" y="649.60" font-size="12.2" fill="#000000" textLength="110.85" lengthAdjust="spacingAndGlyphs" stroke="#000000" stroke-width="0.08">Evaluate Function As</text>
<text x="258.60" y="649.60" font-size="12.2" fill="#000000" textLength="63.17" lengthAdjust="spacingAndGlyphs" stroke="#000000" stroke-width="0.08">CentrePoint</text>
<text x="44.57" y="668.60" font-size="12.2" fill="#000000" textLength="41.08" lengthAdjust="spacingAndGlyphs" stroke="#000000" stroke-width="0.08">Fit Type</text>
<text x="258.67" y="668.60" font-size="12.2" fill="#000000" textLength="55.81" lengthAdjust="spacingAndGlyphs" stroke="#000000" stroke-width="0.08">Sequential</text>
<text x="508.23" y="243.00" font-size="11.2" fill="#000000" textLength="46.44" lengthAdjust="spacingAndGlyphs" stroke="#000000" stroke-width="0.15">Mini-plots</text>
<text x="503.63" y="657.40" font-size="11.2" fill="#000000" textLength="70.92" lengthAdjust="spacingAndGlyphs" stroke="#000000" stroke-width="0.15">Plot Spectrum:</text>
<text x="586.23" y="657.60" font-size="11.2" fill="#000000" textLength="6.49" lengthAdjust="spacingAndGlyphs" stroke="#000000" stroke-width="0.15">0</text>
<text x="669.56" y="656.90" font-size="11.2" fill="#000000" textLength="91.98" lengthAdjust="spacingAndGlyphs" stroke="#000000" stroke-width="0.15">Fit Single Spectrum</text>
<text x="772.43" y="656.90" font-size="11.2" fill="#000000" textLength="99.52" lengthAdjust="spacingAndGlyphs" stroke="#000000" stroke-width="0.15">Plot Current Preview</text>
<text x="898.67" y="656.90" font-size="11.2" fill="#000000" textLength="50.50" lengthAdjust="spacingAndGlyphs" stroke="#000000" stroke-width="0.15">Plot Guess</text>
<text x="28.53" y="719.60" font-size="11.2" fill="#000000" textLength="52.57" lengthAdjust="spacingAndGlyphs" stroke="#000000" stroke-width="0.15">Fit Spectra</text>
<text x="90.72" y="719.60" font-size="11.2" fill="#000000" textLength="32.34" lengthAdjust="spacingAndGlyphs" stroke="#000000" stroke-width="0.15">Range</text>
<text x="149.76" y="719.60" font-size="11.2" fill="#000000" textLength="4.45" lengthAdjust="spacingAndGlyphs" stroke="#000000" stroke-width="0.15">:</text>
<text x="172.53" y="719.60" font-size="11.2" fill="#000000" textLength="6.49" lengthAdjust="spacingAndGlyphs" stroke="#000000" stroke-width="0.15">0</text>
<text x="236.63" y="719.60" font-size="11.2" fill="#000000" textLength="9.41" lengthAdjust="spacingAndGlyphs" stroke="#000000" stroke-width="0.15">to</text>
<text x="272.30" y="719.60" font-size="11.2" fill="#000000" textLength="6.70" lengthAdjust="spacingAndGlyphs" stroke="#000000" stroke-width="0.15">6</text>
<text x="489.15" y="719.60" font-size="11.2" fill="#000000" textLength="129.51" lengthAdjust="spacingAndGlyphs" stroke="#000000" stroke-width="0.15">Mask X Range of Spectrum</text>
<text x="636.93" y="719.60" font-size="11.2" fill="#000000" textLength="6.49" lengthAdjust="spacingAndGlyphs" stroke="#000000" stroke-width="0.15">0</text>
<text x="28.62" y="754.00" font-size="11.2" fill="#000000" textLength="20.24" lengthAdjust="spacingAndGlyphs" stroke="#000000" stroke-width="0.15">Run</text>
<text x="481.51" y="772.80" font-size="11.2" fill="#000000" textLength="20.46" lengthAdjust="spacingAndGlyphs" stroke="#000000" stroke-width="0.15">Run</text>
<text x="28.98" y="798.70" font-size="11.2" fill="#000000" textLength="34.60" lengthAdjust="spacingAndGlyphs" stroke="#000000" stroke-width="0.15">Output</text>
<text x="29.78" y="826.90" font-size="11.2" fill="#000000" textLength="23.01" lengthAdjust="spacingAndGlyphs" stroke="#000000" stroke-width="0.15">Plot:</text>
<text x="63.00" y="826.90" font-size="11.2" fill="#000000" textLength="11.38" lengthAdjust="spacingAndGlyphs" stroke="#000000" stroke-width="0.15">All</text>
<text x="191.51" y="826.90" font-size="11.2" fill="#000000" textLength="19.18" lengthAdjust="spacingAndGlyphs" stroke="#000000" stroke-width="0.15">Plot</text>
<text x="808.54" y="827.00" font-size="11.2" fill="#000000" textLength="52.02" lengthAdjust="spacingAndGlyphs" stroke="#000000" stroke-width="0.15">Edit Result</text>
<text x="887.12" y="827.00" font-size="11.2" fill="#000000" textLength="57.45" lengthAdjust="spacingAndGlyphs" stroke="#000000" stroke-width="0.15">Save Result</text>
<text x="50.92" y="879.70" font-size="11.2" fill="#000000" textLength="5.33" lengthAdjust="spacingAndGlyphs" stroke="#000000" stroke-width="0.15">?</text>
<text x="79.31" y="879.70" font-size="11.2" fill="#000000" textLength="13.01" lengthAdjust="spacingAndGlyphs" stroke="#000000" stroke-width="0.15">Py</text>
<text x="879.85" y="878.70" font-size="11.2" fill="#000000" textLength="92.53" lengthAdjust="spacingAndGlyphs" stroke="#000000" stroke-width="0.15">Manage Directories</text>
<text x="537.94" y="451.40" font-size="12.3" fill="#000000" textLength="19.35" lengthAdjust="spacingAndGlyphs">0.0</text>
<text x="537.94" y="410.73" font-size="12.3" fill="#000000" textLength="19.42" lengthAdjust="spacingAndGlyphs">0.5</text>
<text x="537.43" y="370.05" font-size="12.3" fill="#000000" textLength="19.87" lengthAdjust="spacingAndGlyphs">1.0</text>
<text x="537.42" y="329.38" font-size="12.3" fill="#000000" textLength="19.95" lengthAdjust="spacingAndGlyphs">1.5</text>
<text x="537.80" y="288.70" font-size="12.3" fill="#000000" textLength="19.49" lengthAdjust="spacingAndGlyphs">2.0</text>
<text x="596.55" y="475.30" font-size="12.3" fill="#000000" textLength="29.61" lengthAdjust="spacingAndGlyphs">−0.4</text>
<text x="676.14" y="475.30" font-size="12.3" fill="#000000" textLength="30.01" lengthAdjust="spacingAndGlyphs">−0.2</text>
<text x="761.79" y="475.30" font-size="12.3" fill="#000000" textLength="19.35" lengthAdjust="spacingAndGlyphs">0.0</text>
<text x="841.39" y="475.30" font-size="12.3" fill="#000000" textLength="19.57" lengthAdjust="spacingAndGlyphs">0.2</text>
<text x="921.00" y="475.30" font-size="12.3" fill="#000000" textLength="19.20" lengthAdjust="spacingAndGlyphs">0.4</text>
<text x="0" y="0" font-size="12.3" fill="#000" transform="translate(526.4,384.3) rotate(-90)" textLength="38.8" lengthAdjust="spacingAndGlyphs">(meV)</text>
<text x="0" y="0" font-size="9" fill="#000" transform="translate(520.3,344.2) rotate(-90)" textLength="12" lengthAdjust="spacingAndGlyphs">−1</text>
<text x="886.07" y="280.10" font-size="12.3" fill="#000000" textLength="47.81" lengthAdjust="spacingAndGlyphs">Sample</text>
<text x="884.35" y="299.20" font-size="12.3" fill="#000000" textLength="15.93" lengthAdjust="spacingAndGlyphs">Fit</text>
<text x="514.01" y="573.80" font-size="12.3" fill="#000000" textLength="31.08" lengthAdjust="spacingAndGlyphs">−0.1</text>
<text x="525.85" y="548.00" font-size="12.3" fill="#000000" textLength="19.03" lengthAdjust="spacingAndGlyphs">0.0</text>
<text x="525.85" y="522.20" font-size="12.3" fill="#000000" textLength="19.17" lengthAdjust="spacingAndGlyphs">0.1</text>
<text x="586.36" y="599.50" font-size="12.3" fill="#000000" textLength="29.61" lengthAdjust="spacingAndGlyphs">−0.4</text>
<text x="668.47" y="599.50" font-size="12.3" fill="#000000" textLength="30.01" lengthAdjust="spacingAndGlyphs">−0.2</text>
<text x="756.64" y="599.50" font-size="12.3" fill="#000000" textLength="19.35" lengthAdjust="spacingAndGlyphs">0.0</text>
<text x="838.76" y="599.50" font-size="12.3" fill="#000000" textLength="19.57" lengthAdjust="spacingAndGlyphs">0.2</text>
<text x="920.89" y="599.50" font-size="12.3" fill="#000000" textLength="19.20" lengthAdjust="spacingAndGlyphs">0.4</text>
<text x="677.22" y="619.80" font-size="12.3" fill="#000000" textLength="101.26" lengthAdjust="spacingAndGlyphs">Energy transfer</text>
<text x="782.71" y="619.80" font-size="12.3" fill="#000000" textLength="4.40" lengthAdjust="spacingAndGlyphs">(</text>
<text x="787.78" y="619.80" font-size="12.3" fill="#000000" textLength="29.87" lengthAdjust="spacingAndGlyphs" font-style="italic">meV</text>
<text x="819.04" y="619.80" font-size="12.3" fill="#000000" textLength="4.15" lengthAdjust="spacingAndGlyphs">)</text>
<text x="864.69" y="522.60" font-size="12.3" fill="#000000" textLength="68.81" lengthAdjust="spacingAndGlyphs">Difference</text>
</svg>
<svg width="987" height="897" viewBox="0 0 987 897">
<line x1="929.5" y1="457" x2="929.5" y2="258" stroke="#000" stroke-width="1.2" stroke-dasharray="4.4,1.9"/>
</svg>
</body></html>
